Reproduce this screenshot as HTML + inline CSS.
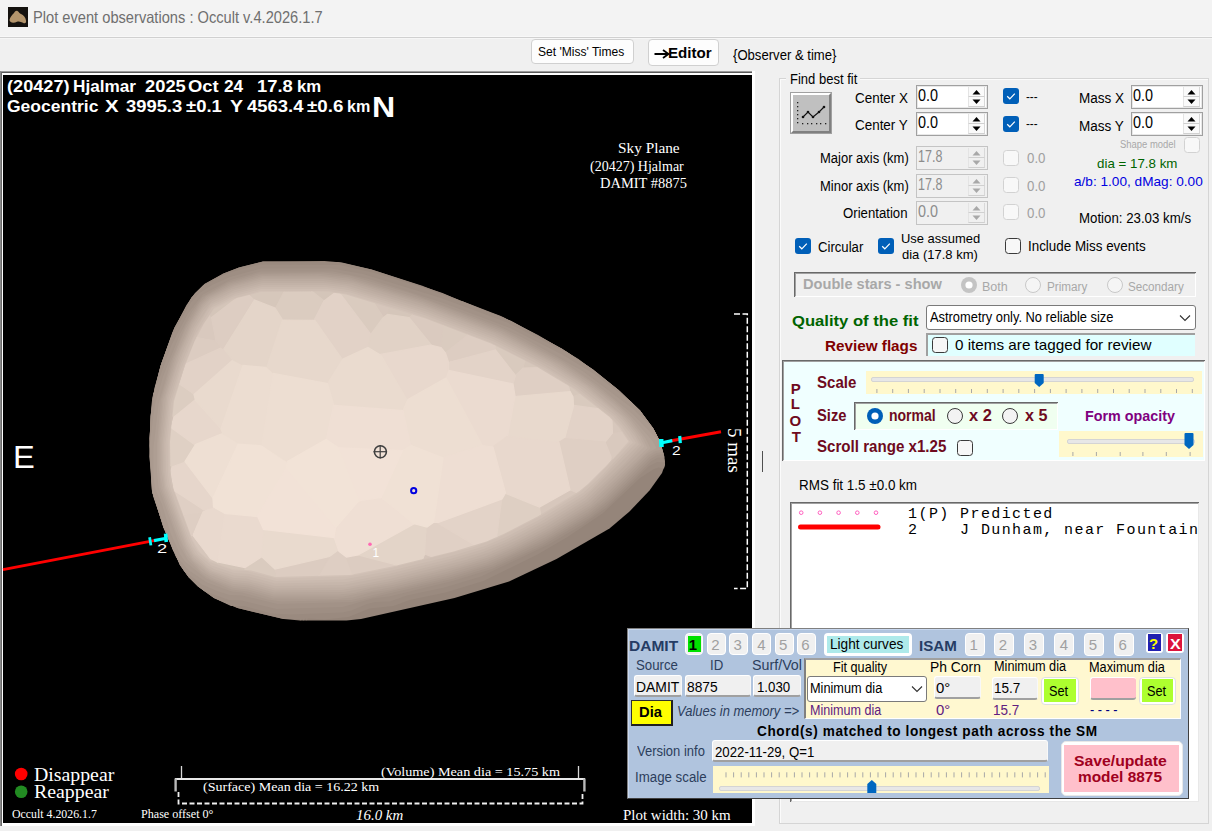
<!DOCTYPE html><html><head><meta charset="utf-8"><style>html,body{margin:0;padding:0;width:1212px;height:831px;overflow:hidden;}body{position:relative;background:#f0f0f0;font-family:"Liberation Sans",sans-serif;}</style></head><body style=""><div style="position:absolute;left:0px;top:0px;width:1212px;height:37px;background:#f3f3f3"></div>
<div style="position:absolute;left:0px;top:36px;width:1212px;height:1px;background:#f8f8f8"></div>
<div style="position:absolute;left:0px;top:37px;width:1212px;height:1px;background:#d0d0d0"></div>
<div style="position:absolute;left:0px;top:38px;width:1212px;height:1px;background:#f6f6f6"></div>
<svg style="position:absolute;left:8px;top:7px" width="20" height="20" viewBox="0 0 20 20"><rect width="20" height="20" fill="#15120f"/><path d="M1.5,13 C2,10 4,8 6,6 C7,4.5 8,3.5 9.5,4 C11,5 11.5,6.5 13,7 C15.5,8 17.5,10.5 18,13.5 C18.5,16 17,17 15,15.8 C13,14.8 11,14 9,14.8 C6.5,16 2,16.5 1.5,13 Z" fill="#b4956c"/></svg>
<div style="position:absolute;left:33.31px;top:9.00px;white-space:pre;color:#6f6f6f;font-family:'Liberation Sans', sans-serif;font-size:16.5px;line-height:16.5px;font-weight:400;font-style:normal;transform:scaleX(0.8880);transform-origin:0 0;">Plot event observations : Occult v.4.2026.1.7</div>
<div style="position:absolute;left:531px;top:39px;width:103px;height:25px;background:#fdfdfd;border:1px solid #d0d0d0;border-radius:4px;box-sizing:border-box"></div>
<div style="position:absolute;left:538.00px;top:45.80px;white-space:pre;color:#000;font-family:'Liberation Sans', sans-serif;font-size:12px;line-height:12px;font-weight:400;font-style:normal;transform:scaleX(1.0035);transform-origin:0 0;">Set 'Miss' Times</div>
<div style="position:absolute;left:648px;top:39px;width:71px;height:27px;background:#fdfdfd;border:1px solid #d0d0d0;border-radius:4px;box-sizing:border-box"></div>
<svg style="position:absolute;left:654px;top:47px" width="16" height="14" viewBox="0 0 16 14"><path d="M0.5,7 L13,7" stroke="#000" stroke-width="2"/><path d="M9,3 L14.5,7 L9,11" fill="none" stroke="#000" stroke-width="1.8"/></svg>
<div style="position:absolute;left:667.99px;top:45.00px;white-space:pre;color:#000;font-family:'Liberation Sans', sans-serif;font-size:15px;line-height:15px;font-weight:700;font-style:normal;transform:scaleX(1.0071);transform-origin:0 0;">Editor</div>
<div style="position:absolute;left:732.60px;top:47.50px;white-space:pre;color:#000;font-family:'Liberation Sans', sans-serif;font-size:14px;line-height:14px;font-weight:400;font-style:normal;transform:scaleX(0.9364);transform-origin:0 0;">{Observer &amp; time}</div>
<div style="position:absolute;left:0px;top:71px;width:755px;height:755px;background:#ffffff"></div>
<div style="position:absolute;left:0px;top:71px;width:752px;height:1px;background:#9a9a9a"></div>
<div style="position:absolute;left:0px;top:72px;width:752px;height:1px;background:#5a5a5a"></div>
<div style="position:absolute;left:0px;top:71px;width:1px;height:755px;background:#8a8a8a"></div>
<div style="position:absolute;left:1px;top:72px;width:1px;height:754px;background:#6a6a6a"></div>
<div style="position:absolute;left:3px;top:75px;width:749px;height:748px;background:#000000"></div>
<div style="position:absolute;left:6.83px;top:77.80px;white-space:pre;color:#ffffff;font-family:'Liberation Sans', sans-serif;font-size:17px;line-height:17px;font-weight:700;font-style:normal;transform:scaleX(1.0684);transform-origin:0 0;">(20427)</div>
<div style="position:absolute;left:73.39px;top:77.80px;white-space:pre;color:#ffffff;font-family:'Liberation Sans', sans-serif;font-size:17px;line-height:17px;font-weight:700;font-style:normal;transform:scaleX(1.0098);transform-origin:0 0;">Hjalmar</div>
<div style="position:absolute;left:144.62px;top:77.80px;white-space:pre;color:#ffffff;font-family:'Liberation Sans', sans-serif;font-size:17px;line-height:17px;font-weight:700;font-style:normal;transform:scaleX(1.0778);transform-origin:0 0;">2025</div>
<div style="position:absolute;left:188.32px;top:77.80px;white-space:pre;color:#ffffff;font-family:'Liberation Sans', sans-serif;font-size:17px;line-height:17px;font-weight:700;font-style:normal;transform:scaleX(1.0815);transform-origin:0 0;">Oct</div>
<div style="position:absolute;left:223.98px;top:77.80px;white-space:pre;color:#ffffff;font-family:'Liberation Sans', sans-serif;font-size:17px;line-height:17px;font-weight:700;font-style:normal;transform:scaleX(1.0167);transform-origin:0 0;">24</div>
<div style="position:absolute;left:256.92px;top:77.80px;white-space:pre;color:#ffffff;font-family:'Liberation Sans', sans-serif;font-size:17px;line-height:17px;font-weight:700;font-style:normal;transform:scaleX(1.0813);transform-origin:0 0;">17.8</div>
<div style="position:absolute;left:297.01px;top:77.80px;white-space:pre;color:#ffffff;font-family:'Liberation Sans', sans-serif;font-size:17px;line-height:17px;font-weight:700;font-style:normal;transform:scaleX(0.9870);transform-origin:0 0;">km</div>
<div style="position:absolute;left:6.87px;top:97.90px;white-space:pre;color:#ffffff;font-family:'Liberation Sans', sans-serif;font-size:17px;line-height:17px;font-weight:700;font-style:normal;transform:scaleX(1.0287);transform-origin:0 0;">Geocentric</div>
<div style="position:absolute;left:104.80px;top:97.90px;white-space:pre;color:#ffffff;font-family:'Liberation Sans', sans-serif;font-size:17px;line-height:17px;font-weight:700;font-style:normal;transform:scaleX(1.2000);transform-origin:0 0;">X</div>
<div style="position:absolute;left:125.90px;top:97.90px;white-space:pre;color:#ffffff;font-family:'Liberation Sans', sans-serif;font-size:17px;line-height:17px;font-weight:700;font-style:normal;transform:scaleX(1.0808);transform-origin:0 0;">3995.3</div>
<div style="position:absolute;left:185.70px;top:97.90px;white-space:pre;color:#ffffff;font-family:'Liberation Sans', sans-serif;font-size:17px;line-height:17px;font-weight:700;font-style:normal;transform:scaleX(1.0879);transform-origin:0 0;">±0.1</div>
<div style="position:absolute;left:230.30px;top:97.90px;white-space:pre;color:#ffffff;font-family:'Liberation Sans', sans-serif;font-size:17px;line-height:17px;font-weight:700;font-style:normal;transform:scaleX(1.1545);transform-origin:0 0;">Y</div>
<div style="position:absolute;left:246.80px;top:97.90px;white-space:pre;color:#ffffff;font-family:'Liberation Sans', sans-serif;font-size:17px;line-height:17px;font-weight:700;font-style:normal;transform:scaleX(1.0846);transform-origin:0 0;">4563.4</div>
<div style="position:absolute;left:307.00px;top:97.90px;white-space:pre;color:#ffffff;font-family:'Liberation Sans', sans-serif;font-size:17px;line-height:17px;font-weight:700;font-style:normal;transform:scaleX(1.1030);transform-origin:0 0;">±0.6</div>
<div style="position:absolute;left:346.95px;top:97.90px;white-space:pre;color:#ffffff;font-family:'Liberation Sans', sans-serif;font-size:17px;line-height:17px;font-weight:700;font-style:normal;transform:scaleX(0.9478);transform-origin:0 0;">km</div>
<div style="position:absolute;left:372.42px;top:91.80px;white-space:pre;color:#ffffff;font-family:'Liberation Sans', sans-serif;font-size:29.5px;line-height:29.5px;font-weight:700;font-style:normal;transform:scaleX(1.0889);transform-origin:0 0;">N</div>
<div style="position:absolute;left:12.66px;top:442.00px;white-space:pre;color:#ffffff;font-family:'Liberation Sans', sans-serif;font-size:30.5px;line-height:30.5px;font-weight:400;font-style:normal;transform:scaleX(1.0706);transform-origin:0 0;">E</div>
<div style="position:absolute;left:618.38px;top:140.50px;white-space:pre;color:#ffffff;font-family:'Liberation Serif', serif;font-size:15px;line-height:15px;font-weight:400;font-style:normal;transform:scaleX(1.0203);transform-origin:0 0;">Sky Plane</div>
<div style="position:absolute;left:589.67px;top:159.00px;white-space:pre;color:#ffffff;font-family:'Liberation Serif', serif;font-size:15px;line-height:15px;font-weight:400;font-style:normal;transform:scaleX(0.9340);transform-origin:0 0;">(20427) Hjalmar</div>
<div style="position:absolute;left:600.43px;top:176.10px;white-space:pre;color:#ffffff;font-family:'Liberation Serif', serif;font-size:15px;line-height:15px;font-weight:400;font-style:normal;transform:scaleX(0.9652);transform-origin:0 0;">DAMIT #8875</div>
<svg style="position:absolute;left:0;top:0" width="1212" height="831" viewBox="0 0 1212 831"><path d="M152.5,397.0 L149.5,438.5 L152.0,491.0 L163.5,527.5 L180.0,565.0 L188.5,577.0 L198.0,586.5 L214.0,598.0 L237.5,608.0 L283.5,619.0 L300.0,620.5 L346.5,620.5 L361.0,619.0 L454.5,598.0 L509.0,581.5 L556.5,559.0 L609.5,528.5 L629.5,511.5 L649.5,490.5 L662.0,473.0 L665.0,464.5 L664.0,455.0 L659.0,439.5 L653.0,428.0 L640.0,410.5 L618.5,390.0 L578.5,359.0 L538.0,335.0 L499.5,315.5 L421.5,285.5 L371.5,269.5 L342.0,262.5 L324.5,261.0 L263.0,261.5 L239.0,267.5 L223.5,273.5 L204.5,284.0 L191.5,297.5 L174.5,327.5 L160.5,366.0Z" fill="#95857a"/><path d="M152.0,400.5 L149.5,438.5 L152.0,491.0 L163.5,527.5 L180.0,565.0 L188.5,577.0 L198.0,586.5 L214.0,598.0 L237.5,608.0 L283.5,619.0 L299.5,619.0 L300.0,620.5 L302.5,619.0 L303.5,620.5 L305.5,618.5 L306.5,620.5 L308.0,618.5 L324.5,619.5 L348.5,617.0 L369.5,608.5 L393.5,606.0 L409.5,600.0 L445.5,592.5 L483.5,581.0 L537.5,554.5 L567.5,537.0 L602.5,513.5 L640.0,478.0 L654.0,469.0 L658.5,467.5 L664.0,468.5 L665.0,464.5 L664.0,455.0 L659.0,439.5 L653.0,428.0 L640.0,410.5 L618.5,390.0 L593.0,369.5 L562.5,349.0 L503.0,317.0 L477.5,308.0 L442.5,293.0 L371.5,269.5 L338.0,262.0 L263.0,261.5 L239.0,267.5 L223.5,273.5 L204.5,284.0 L191.5,297.5 L174.5,327.5 L160.5,366.0Z" fill="#9a8a7f"/><path d="M152.0,400.5 L149.5,438.5 L152.0,491.0 L163.5,527.5 L180.0,565.0 L188.5,577.0 L198.0,586.5 L214.0,598.0 L231.0,606.0 L244.0,606.0 L271.0,613.5 L290.5,614.5 L342.5,612.5 L351.5,610.5 L367.0,604.0 L375.5,602.0 L390.0,601.5 L407.0,595.5 L444.5,587.5 L481.0,576.5 L548.5,544.5 L582.0,525.0 L606.0,508.0 L648.5,466.5 L657.0,462.0 L665.0,462.5 L659.0,439.5 L653.0,428.0 L640.0,410.5 L618.5,390.0 L593.0,369.5 L562.5,349.0 L511.5,321.0 L463.0,301.5 L457.5,300.5 L457.0,299.0 L453.5,299.0 L423.0,287.5 L374.5,273.0 L340.0,265.0 L260.0,264.5 L232.0,272.0 L217.5,277.5 L216.0,279.5 L214.0,279.0 L213.0,281.0 L203.0,285.5 L195.0,293.0 L186.5,305.0 L172.5,332.0 L160.5,366.0Z" fill="#9e8e83"/><path d="M150.5,416.0 L149.5,456.5 L152.0,491.0 L163.5,527.5 L180.0,565.0 L188.5,577.0 L204.0,591.0 L229.0,600.0 L241.5,600.5 L276.5,609.0 L342.5,607.0 L372.5,598.5 L389.0,596.5 L452.5,581.0 L492.0,569.0 L542.5,545.5 L589.5,518.0 L606.5,505.0 L651.5,461.0 L658.0,457.5 L664.5,457.5 L660.0,442.0 L655.0,431.5 L640.0,410.5 L618.5,390.0 L593.0,369.5 L565.5,351.0 L562.0,350.5 L561.5,348.5 L560.0,349.5 L559.5,347.5 L558.5,348.5 L506.0,322.0 L441.0,298.0 L363.0,274.0 L331.5,268.5 L261.0,268.5 L230.0,277.0 L213.0,284.5 L199.5,293.0 L191.0,302.5 L174.0,332.5 L172.0,333.5 L173.0,335.0 L171.5,336.0 L161.5,363.0 L154.5,388.0Z" fill="#a29287"/><path d="M150.5,416.0 L149.5,456.5 L153.0,496.0 L167.0,536.0 L175.5,556.0 L184.0,571.0 L202.0,584.5 L217.0,591.0 L229.5,595.0 L242.0,595.5 L277.5,604.0 L352.0,602.0 L452.0,579.0 L493.0,566.5 L543.0,543.0 L589.0,516.0 L608.0,501.0 L650.5,459.0 L657.5,455.0 L663.5,454.0 L659.0,439.5 L653.0,428.0 L640.0,410.5 L631.0,401.5 L594.0,374.0 L563.0,355.0 L510.0,328.0 L443.5,303.0 L369.0,279.0 L333.5,271.5 L260.5,271.5 L230.5,280.0 L203.0,294.5 L188.0,313.5 L171.5,345.0 L158.0,382.0 L155.5,385.5 L155.5,389.5 L153.0,394.0 L154.0,395.0Z" fill="#a6968b"/><path d="M149.5,445.5 L152.5,493.5 L156.5,500.5 L156.0,504.0 L158.5,505.5 L157.0,508.0 L159.5,509.0 L163.5,527.5 L167.0,533.0 L173.0,550.5 L176.5,555.0 L175.5,556.0 L178.0,557.0 L177.0,559.0 L178.5,559.0 L189.0,570.5 L207.0,582.5 L231.5,591.5 L242.0,592.5 L267.5,599.5 L281.5,601.5 L351.5,600.0 L448.0,578.0 L492.5,564.5 L546.5,539.0 L588.5,514.0 L604.0,502.0 L649.5,457.0 L656.5,453.0 L663.0,452.0 L659.0,439.5 L653.0,428.0 L632.5,408.5 L582.5,371.0 L522.5,337.5 L497.0,325.5 L411.0,293.5 L349.5,275.5 L324.0,272.5 L258.5,273.5 L228.0,282.5 L202.5,297.0 L192.0,311.5 L180.0,334.0 L163.0,376.5 L155.0,404.0Z" fill="#aa9a8f"/><path d="M153.5,477.0 L155.0,488.5 L162.0,504.5 L170.5,533.0 L179.5,553.5 L185.0,561.5 L206.0,578.5 L231.5,589.5 L247.5,591.5 L273.0,598.5 L337.0,599.0 L352.5,597.5 L371.0,592.5 L391.5,589.5 L447.5,576.0 L485.5,565.0 L509.5,555.0 L546.0,537.0 L588.0,512.0 L606.5,497.0 L648.0,455.5 L655.5,451.0 L662.5,449.5 L658.5,438.5 L653.5,435.5 L633.0,414.5 L597.0,385.0 L563.5,362.0 L502.5,329.5 L427.0,300.5 L348.5,277.0 L321.0,274.0 L261.5,274.5 L229.5,283.5 L206.0,296.0 L199.0,303.5 L186.0,325.0 L171.0,361.0 L158.5,404.0 L153.5,447.5Z" fill="#ae9e93"/><path d="M157.0,472.5 L158.5,487.0 L179.5,545.0 L188.0,560.0 L203.0,574.5 L210.0,579.0 L233.5,588.0 L247.5,589.5 L273.5,596.5 L343.0,596.5 L393.0,587.0 L447.0,574.0 L486.5,562.5 L511.5,552.0 L550.0,532.5 L591.0,507.5 L602.0,498.5 L647.0,453.5 L656.5,448.0 L652.5,441.0 L632.0,417.5 L614.5,401.0 L590.5,382.0 L562.0,363.0 L503.0,331.5 L423.5,301.0 L348.0,278.5 L317.5,275.5 L262.0,276.0 L231.0,284.5 L207.0,297.0 L200.0,304.5 L185.5,329.0 L173.5,358.0 L161.0,399.0 L157.0,443.5Z" fill="#b2a297"/><path d="M158.5,465.0 L160.5,487.5 L176.0,531.5 L186.5,555.0 L201.0,571.0 L213.0,578.5 L233.0,586.0 L248.0,587.5 L273.5,594.5 L339.0,594.5 L354.0,593.0 L370.5,588.5 L392.5,585.0 L446.5,572.0 L487.5,560.0 L517.5,547.0 L549.5,530.5 L590.5,505.5 L650.5,448.5 L645.0,437.5 L630.5,418.5 L619.0,407.0 L593.0,386.0 L560.5,364.0 L500.0,332.0 L423.0,302.5 L353.5,281.5 L326.5,277.5 L262.5,277.5 L232.5,285.5 L209.5,297.0 L202.0,304.0 L190.5,322.5 L175.0,358.0 L162.5,398.5 L158.5,441.5Z" fill="#b6a69b"/><path d="M160.5,477.0 L163.0,490.5 L183.0,544.5 L192.5,560.5 L209.0,574.5 L233.5,584.0 L248.5,585.5 L274.0,592.5 L344.5,592.0 L392.0,583.0 L461.0,566.0 L490.0,557.0 L514.0,546.5 L549.0,528.5 L589.5,503.5 L647.5,448.0 L642.0,436.5 L629.5,420.0 L616.5,407.0 L595.5,390.0 L559.0,365.0 L499.5,333.5 L419.5,303.0 L353.0,283.0 L323.5,279.0 L263.0,279.0 L234.0,286.5 L210.5,298.0 L203.0,305.0 L191.0,324.5 L176.5,358.0 L163.5,400.5 L160.0,439.5Z" fill="#baaa9f"/><path d="M161.5,470.5 L164.5,490.5 L186.5,548.5 L194.0,560.0 L209.0,572.5 L233.5,582.0 L248.5,583.5 L274.5,590.5 L342.5,590.0 L391.5,581.0 L445.5,568.0 L484.0,557.0 L509.0,546.5 L545.0,528.0 L588.0,501.5 L644.5,446.5 L640.0,437.0 L625.5,418.0 L587.0,385.5 L550.5,362.0 L495.5,333.5 L428.5,308.0 L351.0,284.5 L323.5,281.0 L262.5,281.0 L231.0,289.5 L209.5,300.5 L203.0,307.5 L192.0,325.5 L180.0,352.5 L166.0,395.5 L161.5,438.0Z" fill="#beaea3"/><path d="M163.0,471.5 L165.0,487.0 L186.5,545.0 L194.0,557.5 L209.5,571.0 L233.5,580.0 L249.0,581.5 L275.0,588.5 L346.0,587.5 L389.5,579.0 L464.0,560.5 L489.0,552.5 L516.0,540.5 L547.0,524.0 L586.0,500.0 L625.0,463.0 L641.5,445.0 L635.0,433.0 L621.0,415.5 L585.0,386.0 L550.5,364.0 L494.0,335.0 L424.0,308.5 L346.5,285.5 L324.5,283.0 L262.5,283.0 L235.0,290.0 L212.0,301.0 L203.0,310.5 L191.5,330.0 L177.0,365.0 L167.0,397.5 L162.5,444.0Z" fill="#c2b2a7"/><path d="M164.5,472.0 L166.0,485.5 L187.0,542.5 L193.5,554.5 L207.0,567.5 L213.0,571.0 L234.0,578.0 L246.0,578.5 L274.5,586.0 L342.5,585.0 L391.0,576.0 L445.0,563.0 L483.0,552.0 L506.0,542.5 L545.5,522.0 L584.5,498.0 L639.0,444.5 L635.5,437.0 L623.0,420.5 L611.0,409.0 L585.0,388.5 L553.5,368.0 L496.0,338.0 L426.5,311.5 L346.5,287.5 L325.5,285.0 L262.0,285.0 L232.0,293.0 L210.5,304.0 L194.5,328.0 L182.5,355.0 L168.5,398.0 L164.0,442.0Z" fill="#c6b6ab"/><path d="M166.0,472.0 L167.5,485.0 L188.0,541.0 L195.0,554.0 L207.5,565.5 L215.0,569.5 L234.0,575.5 L249.0,576.5 L275.0,583.5 L347.0,582.0 L390.5,573.5 L452.0,558.5 L484.0,549.0 L504.5,540.5 L539.5,522.5 L583.0,496.0 L590.5,490.0 L636.0,443.0 L629.0,431.5 L616.0,416.0 L577.5,385.5 L534.0,359.5 L492.0,338.5 L420.5,311.5 L348.5,290.0 L326.5,287.0 L261.5,287.0 L236.0,293.5 L213.0,304.5 L207.5,310.0 L196.5,328.0 L181.0,364.0 L169.5,401.5 L165.5,444.0Z" fill="#cabaaf"/><path d="M168.0,476.0 L170.0,487.0 L180.0,516.0 L192.0,545.5 L198.0,554.5 L211.5,565.5 L234.0,573.0 L249.5,574.0 L276.0,581.0 L343.5,579.5 L392.0,570.5 L451.5,556.0 L485.0,546.0 L505.0,537.5 L538.0,520.5 L583.0,493.0 L598.5,479.0 L633.0,442.5 L622.0,426.0 L613.0,416.0 L577.5,388.0 L548.0,369.5 L494.0,341.5 L424.5,315.0 L350.5,292.5 L328.0,289.0 L261.0,289.0 L233.0,296.5 L211.5,307.5 L193.5,337.5 L180.0,372.0 L171.0,403.0 L167.5,440.0Z" fill="#cebeb3"/><path d="M169.5,471.5 L171.0,484.0 L191.5,540.0 L197.5,551.0 L209.5,562.0 L233.5,570.5 L247.0,571.0 L276.5,578.5 L348.0,576.5 L391.5,568.0 L472.5,547.5 L498.0,538.0 L540.0,516.5 L579.5,492.5 L593.0,481.0 L630.0,442.0 L620.0,427.0 L610.5,416.5 L575.5,389.0 L543.0,369.0 L490.0,342.0 L417.0,314.5 L346.0,293.5 L328.0,291.0 L260.5,291.0 L233.0,298.5 L214.0,308.0 L199.0,330.5 L184.5,364.5 L173.0,401.5 L169.0,444.0Z" fill="#d2c2b7"/><path d="M171.0,468.5 L173.0,484.5 L193.5,540.0 L199.5,550.5 L210.0,560.0 L233.5,568.0 L250.0,569.0 L277.5,576.0 L307.5,574.0 L346.0,574.0 L388.5,566.0 L448.5,551.5 L478.5,543.0 L499.5,534.5 L538.5,514.5 L578.0,490.5 L598.0,472.5 L627.0,441.0 L608.5,417.5 L572.0,389.0 L542.5,371.0 L492.0,345.0 L422.5,318.5 L349.5,296.5 L328.0,293.5 L260.0,293.5 L237.0,299.0 L214.0,310.0 L201.5,329.5 L187.0,362.5 L175.0,400.5 L170.5,448.0Z" fill="#d6c6bb"/><path d="M173.0,471.5 L174.5,483.0 L195.5,540.0 L202.0,550.5 L210.5,558.0 L233.0,565.5 L250.5,566.5 L278.0,573.5 L301.0,571.5 L350.0,571.0 L392.5,562.5 L448.0,549.0 L481.0,539.5 L502.0,530.5 L537.0,512.5 L578.0,487.5 L596.5,470.5 L624.0,440.5 L610.0,421.5 L568.5,389.0 L520.0,361.0 L489.0,346.5 L418.0,322.0 L344.5,302.0 L318.0,299.5 L258.5,300.0 L237.5,305.0 L216.5,314.0 L201.5,335.5 L193.5,350.5 L180.0,388.5 L176.0,404.5 L172.5,443.0Z" fill="#dacabf"/><path d="M174.5,469.0 L176.0,482.0 L196.5,537.5 L202.0,547.5 L211.0,556.0 L233.0,563.0 L250.5,564.0 L274.0,570.5 L308.0,568.5 L348.0,568.5 L392.0,560.0 L455.0,544.5 L481.5,536.5 L503.5,527.0 L546.0,504.5 L573.0,485.5 L584.5,474.0 L617.5,435.0 L603.5,418.5 L566.0,391.5 L514.0,364.5 L482.5,351.0 L407.5,325.5 L342.0,308.0 L322.0,306.0 L259.5,306.0 L240.0,310.5 L220.5,318.5 L201.5,347.5 L184.5,385.0 L178.0,403.0 L174.0,447.5Z" fill="#decec3"/><path d="M176.5,471.5 L177.5,480.5 L198.5,537.5 L203.5,546.5 L211.5,554.0 L233.0,560.5 L251.0,561.5 L274.5,568.0 L301.5,566.0 L352.0,565.5 L447.0,544.0 L473.5,536.5 L488.0,530.5 L524.5,508.5 L566.0,479.0 L577.0,468.5 L608.5,431.0 L604.5,426.5 L580.5,409.0 L547.5,388.5 L489.5,360.5 L428.5,339.0 L358.5,318.5 L336.0,313.5 L258.0,312.5 L239.0,317.0 L224.0,323.5 L206.0,351.5 L189.0,389.5 L183.0,407.5 L176.5,445.5Z" fill="#e2d2c7"/><path d="M181.5,477.5 L187.5,494.0 L194.5,522.5 L202.5,541.5 L211.0,551.0 L230.0,556.0 L253.5,557.5 L272.5,563.5 L302.0,561.0 L344.5,561.0 L386.0,553.0 L437.0,540.0 L468.0,529.0 L486.0,520.5 L517.5,501.5 L562.0,470.0 L597.5,429.5 L553.0,399.0 L507.0,375.5 L482.0,364.5 L430.5,346.5 L339.0,329.5 L256.0,328.5 L231.0,333.5 L215.0,347.0 L203.5,370.5 L190.0,404.0 L182.5,445.5Z" fill="#e6d6cb"/><path d="M187.5,474.0 L207.5,539.5 L214.5,545.0 L228.5,547.5 L240.5,547.0 L252.0,548.5 L271.0,554.5 L298.5,552.0 L349.5,551.5 L403.5,539.5 L446.5,526.0 L480.0,512.5 L519.0,489.0 L555.5,463.0 L564.0,455.0 L585.5,429.0 L545.0,402.0 L493.5,385.0 L467.5,378.0 L395.5,362.0 L334.0,351.5 L249.5,351.5 L245.0,352.5 L198.0,399.0 L194.5,410.5 L188.5,445.5Z" fill="#eadacf"/><path d="M193.5,465.0 L194.0,474.0 L199.5,488.0 L203.0,506.0 L212.5,534.5 L215.0,537.0 L226.5,539.0 L244.0,538.5 L253.5,540.0 L271.5,545.5 L304.5,542.5 L350.5,542.5 L389.0,533.5 L439.5,517.5 L475.5,503.5 L527.5,471.5 L526.0,441.5 L523.0,418.5 L471.0,401.5 L369.5,396.0 L297.5,397.0 L228.5,401.5 L218.5,412.5 L195.5,445.5Z" fill="#eeded3"/><path d="M451.0,474.5 L446.0,458.0 L438.0,441.5 L374.0,435.5 L325.5,435.5 L290.0,438.0 L225.0,447.0 L218.5,458.0 L208.0,498.0 L217.0,528.0 L246.0,528.5 L259.0,531.0 L272.0,536.0 L303.5,532.0 L348.0,532.5 L386.5,523.5 L451.0,502.0 L452.5,496.0Z" fill="#f2e2d7"/><defs><clipPath id="fc"><path d="M170.5,475.0 L173.5,488.5 L192.5,540.0 L200.0,552.5 L211.5,562.0 L232.5,569.0 L251.0,570.5 L275.0,577.0 L350.0,575.0 L394.5,566.0 L453.5,551.5 L486.5,541.5 L503.5,534.0 L537.5,516.5 L579.5,491.0 L588.0,484.0 L613.5,458.5 L628.5,441.5 L619.0,427.5 L609.5,417.0 L573.0,388.5 L535.5,366.0 L491.0,343.5 L425.5,318.5 L346.0,294.5 L328.5,292.0 L314.5,291.5 L260.5,292.0 L237.0,298.0 L214.0,309.0 L204.0,323.5 L194.5,341.5 L184.5,367.0 L174.0,401.0 L170.0,441.5Z"/></clipPath></defs><g clip-path="url(#fc)"><polygon points="171.5,467.0 159.0,460.0 150.0,459.0 151.5,486.0 168.0,472.5" fill="#d3c4b8" stroke="#d3c4b8" stroke-width="1.2"/><polygon points="539.0,336.5 529.0,347.5 523.5,367.5 542.0,367.0 555.5,357.5" fill="#d6c7bb" stroke="#d6c7bb" stroke-width="1.2"/><polygon points="605.0,379.5 591.5,369.0 570.0,386.0 570.0,391.0 573.5,396.0 602.0,387.5" fill="#d6c7bb" stroke="#d6c7bb" stroke-width="1.2"/><polygon points="628.0,399.0 614.0,406.5 612.0,409.5 613.0,433.0 634.5,430.5 633.0,403.5" fill="#d7c7bc" stroke="#d7c7bc" stroke-width="1.2"/><polygon points="186.0,565.5 209.0,586.5 217.5,562.5 205.5,561.0 191.0,562.0" fill="#d3c4b8" stroke="#d3c4b8" stroke-width="1.2"/><polygon points="202.5,512.5 177.5,516.0 164.0,527.5 170.0,542.5 187.0,540.5 190.5,537.5" fill="#decec3" stroke="#decec3" stroke-width="1.2"/><polygon points="170.5,470.5 151.5,486.5 154.5,501.0 160.0,500.5 173.0,490.0" fill="#d2c3b7" stroke="#d2c3b7" stroke-width="1.2"/><polygon points="164.0,403.5 151.5,407.0 150.5,425.0 158.5,427.0 170.5,427.0 173.5,417.5" fill="#d3c3b8" stroke="#d3c3b8" stroke-width="1.2"/><polygon points="167.5,346.0 164.5,357.0 175.5,383.5 179.0,383.5 185.0,364.0" fill="#d2c2b7" stroke="#d2c2b7" stroke-width="1.2"/><polygon points="187.5,304.0 181.0,317.0 190.5,336.0 215.5,340.5 211.5,318.0 205.5,309.5" fill="#d9c9be" stroke="#d9c9be" stroke-width="1.2"/><polygon points="254.5,263.5 246.5,265.5 248.5,294.0 250.5,295.5 269.0,271.5" fill="#d3c3b8" stroke="#d3c3b8" stroke-width="1.2"/><polygon points="322.5,269.5 300.5,282.0 324.0,300.5 336.0,291.5 335.0,287.5" fill="#d4c5b9" stroke="#d4c5b9" stroke-width="1.2"/><polygon points="366.5,281.0 363.0,285.5 383.5,317.0 387.5,314.0 390.5,305.0 384.5,284.0" fill="#d6c6bb" stroke="#d6c6bb" stroke-width="1.2"/><polygon points="423.0,295.0 402.0,294.0 391.0,304.0 388.0,314.0 409.5,317.0 423.5,304.0" fill="#d5c6ba" stroke="#d5c6ba" stroke-width="1.2"/><polygon points="463.5,305.5 444.0,318.5 441.0,347.0 445.5,352.5 475.5,328.5" fill="#dacbbf" stroke="#dacbbf" stroke-width="1.2"/><polygon points="495.5,334.5 495.5,349.5 516.0,374.5 523.0,367.5 528.5,347.5 514.0,335.5" fill="#d9cabe" stroke="#d9cabe" stroke-width="1.2"/><polygon points="613.0,407.0 602.0,388.0 573.0,396.5 574.0,405.0 611.5,410.0" fill="#d9cabe" stroke="#d9cabe" stroke-width="1.2"/><polygon points="612.5,433.5 605.5,442.0 612.0,458.5 628.0,468.5 637.5,467.0 642.5,464.0 636.0,432.0 634.0,431.0" fill="#d9c9be" stroke="#d9c9be" stroke-width="1.2"/><polygon points="218.0,562.5 209.0,587.0 208.5,592.5 218.0,592.5 241.5,587.0 245.0,568.0" fill="#d4c5b9" stroke="#d4c5b9" stroke-width="1.2"/><polygon points="187.5,540.5 189.5,562.0 212.0,560.5 193.0,536.0" fill="#d6c6bb" stroke="#d6c6bb" stroke-width="1.2"/><polygon points="160.5,500.5 177.0,515.5 202.5,512.0 204.5,510.5 173.5,490.5" fill="#dfcfc4" stroke="#dfcfc4" stroke-width="1.2"/><polygon points="170.5,427.5 159.5,460.0 172.5,466.5 184.5,462.0 194.5,445.0" fill="#dfd0c4" stroke="#dfd0c4" stroke-width="1.2"/><polygon points="179.0,384.0 171.0,385.5 164.0,403.0 173.5,417.0 194.5,400.0 193.5,394.5" fill="#dccdc1" stroke="#dccdc1" stroke-width="1.2"/><polygon points="168.0,345.5 185.5,364.0 221.0,347.5 215.5,341.0 192.0,336.5" fill="#dcccc1" stroke="#dcccc1" stroke-width="1.2"/><polygon points="241.5,294.0 227.0,288.0 205.5,306.0 205.0,308.5 211.5,317.0" fill="#d4c5b9" stroke="#d4c5b9" stroke-width="1.2"/><polygon points="286.0,265.0 268.5,272.5 251.0,295.5 254.0,299.5 275.0,307.5 290.5,279.0" fill="#d6c7bb" stroke="#d6c7bb" stroke-width="1.2"/><polygon points="290.5,279.5 275.5,308.5 282.5,319.5 314.0,319.0 323.5,300.5 301.0,282.5" fill="#dbccc0" stroke="#dbccc0" stroke-width="1.2"/><polygon points="340.5,292.5 371.0,334.0 383.0,317.0 363.0,286.0" fill="#dacbbf" stroke="#dacbbf" stroke-width="1.2"/><polygon points="423.5,304.5 409.5,317.5 431.5,344.5 440.5,347.0 443.5,318.0" fill="#dacabf" stroke="#dacabf" stroke-width="1.2"/><polygon points="493.5,330.5 486.0,328.0 476.0,328.5 446.0,352.5 448.5,361.5 495.0,349.5 495.0,334.0" fill="#ddcdc2" stroke="#ddcdc2" stroke-width="1.2"/><polygon points="513.5,383.0 515.5,396.0 569.5,390.5 568.5,385.5 542.0,367.5 523.0,368.0 516.0,375.0" fill="#dfcfc4" stroke="#dfcfc4" stroke-width="1.2"/><polygon points="574.0,405.5 565.5,438.0 605.5,441.5 612.5,433.0 611.5,410.5" fill="#e2d2c7" stroke="#e2d2c7" stroke-width="1.2"/><polygon points="628.0,469.0 611.5,459.0 585.0,494.5 599.5,498.5 626.0,478.5" fill="#d2c3b7" stroke="#d2c3b7" stroke-width="1.2"/><polygon points="578.0,493.5 569.5,490.5 540.0,507.0 545.0,535.5 563.5,537.0 573.0,529.5" fill="#d7c7bc" stroke="#d7c7bc" stroke-width="1.2"/><polygon points="424.5,555.0 423.5,559.0 440.5,582.5 465.0,580.5 469.0,579.0 469.0,571.5" fill="#d4c4b9" stroke="#d4c4b9" stroke-width="1.2"/><polygon points="338.0,551.0 330.0,556.5 306.5,596.5 324.5,605.0 354.5,580.5 346.0,557.0" fill="#decec3" stroke="#decec3" stroke-width="1.2"/><polygon points="262.0,557.5 245.0,569.0 242.5,587.0 248.0,601.0 263.5,597.0 277.0,578.5 275.0,569.5" fill="#dacbbf" stroke="#dacbbf" stroke-width="1.2"/><polygon points="212.5,507.5 203.0,512.0 193.0,535.5 210.5,558.5 217.5,562.0 224.5,513.5" fill="#e9d9ce" stroke="#e9d9ce" stroke-width="1.2"/><polygon points="172.0,467.0 171.0,470.5 174.0,490.5 204.0,510.0 213.0,507.0 212.0,497.0 184.5,462.5" fill="#e6d6cb" stroke="#e6d6cb" stroke-width="1.2"/><polygon points="195.0,400.0 174.0,417.0 171.0,427.5 194.5,444.5 222.0,433.0 220.5,428.5" fill="#e7d7cc" stroke="#e7d7cc" stroke-width="1.2"/><polygon points="232.0,359.5 225.0,350.5 221.0,348.0 186.0,364.0 179.5,384.0 194.0,394.0" fill="#e2d2c7" stroke="#e2d2c7" stroke-width="1.2"/><polygon points="248.5,294.5 242.0,294.0 211.5,317.5 216.0,341.0 223.0,348.5 254.0,300.0" fill="#ddcdc2" stroke="#ddcdc2" stroke-width="1.2"/><polygon points="336.0,292.0 324.0,301.0 314.5,319.5 342.5,359.0 367.5,347.0 370.5,334.0 340.0,293.5" fill="#e2d2c7" stroke="#e2d2c7" stroke-width="1.2"/><polygon points="368.0,347.0 381.5,354.0 431.0,344.5 409.0,317.5 387.5,314.5 382.5,318.5 371.5,333.5" fill="#e1d2c6" stroke="#e1d2c6" stroke-width="1.2"/><polygon points="515.5,375.5 495.5,350.0 449.0,362.5 450.0,370.5 513.0,383.5" fill="#e3d3c8" stroke="#e3d3c8" stroke-width="1.2"/><polygon points="570.0,391.5 515.0,396.5 508.0,436.0 557.0,442.0 564.5,438.5 573.5,406.0 573.0,397.0" fill="#e8d9cd" stroke="#e8d9cd" stroke-width="1.2"/><polygon points="565.0,438.5 559.5,442.0 570.0,489.5 578.5,493.5 584.5,494.0 611.0,459.5 611.0,456.5 605.0,442.0" fill="#dfcfc4" stroke="#dfcfc4" stroke-width="1.2"/><polygon points="505.5,494.0 502.0,499.5 496.5,539.0 536.0,539.0 544.0,536.0 539.5,507.5" fill="#decfc3" stroke="#decfc3" stroke-width="1.2"/><polygon points="426.5,527.5 425.0,554.0 469.0,571.0 481.0,549.0 437.0,523.0 434.0,522.5" fill="#e0d0c5" stroke="#e0d0c5" stroke-width="1.2"/><polygon points="346.5,557.5 355.5,581.5 361.0,585.5 375.0,586.0 410.0,576.0 412.5,569.5 359.0,555.5" fill="#dcccc1" stroke="#dcccc1" stroke-width="1.2"/><polygon points="329.5,557.0 276.5,569.0 275.5,570.0 277.0,577.5 296.0,599.5 306.0,596.5" fill="#dcccc1" stroke="#dcccc1" stroke-width="1.2"/><polygon points="225.0,514.0 218.0,562.0 245.0,567.5 261.5,557.0 263.5,530.0 257.0,517.0" fill="#eadacf" stroke="#eadacf" stroke-width="1.2"/><polygon points="222.5,433.5 195.5,444.5 185.0,461.5 212.5,497.5 238.0,444.5 237.0,442.5" fill="#eedfd3" stroke="#eedfd3" stroke-width="1.2"/><polygon points="233.0,360.0 194.0,394.5 195.5,400.5 220.5,428.0 242.5,366.0" fill="#e9dace" stroke="#e9dace" stroke-width="1.2"/><polygon points="254.5,300.0 224.0,349.0 232.5,359.5 243.0,365.0 266.5,367.0 282.0,319.0 275.0,308.0" fill="#e4d5c9" stroke="#e4d5c9" stroke-width="1.2"/><polygon points="441.0,347.5 430.5,345.0 380.5,354.5 407.0,399.5 446.0,377.5 448.5,371.0 448.5,362.0 445.5,353.0" fill="#e8d8cd" stroke="#e8d8cd" stroke-width="1.2"/><polygon points="449.0,370.5 446.5,378.0 482.5,445.0 493.0,446.5 507.5,436.0 515.0,396.0 513.0,384.0" fill="#ebdbd0" stroke="#ebdbd0" stroke-width="1.2"/><polygon points="493.5,446.5 506.0,493.5 539.5,507.0 570.0,490.0 559.0,442.5 507.0,436.5" fill="#e8d8cd" stroke="#e8d8cd" stroke-width="1.2"/><polygon points="501.5,500.0 437.5,523.0 480.5,548.5 491.5,546.5 496.5,538.0" fill="#e3d3c8" stroke="#e3d3c8" stroke-width="1.2"/><polygon points="426.0,527.5 414.0,524.5 358.5,555.0 412.5,569.0 423.0,558.5 424.5,554.5" fill="#e3d4c8" stroke="#e3d4c8" stroke-width="1.2"/><polygon points="264.0,530.0 262.0,557.0 275.0,569.0 329.5,556.5 337.5,550.5 333.5,537.5" fill="#e9dace" stroke="#e9dace" stroke-width="1.2"/><polygon points="238.5,443.5 213.0,498.0 213.5,507.0 225.0,513.5 257.0,516.5 285.0,470.0 286.5,462.0 261.5,445.0" fill="#f1e2d6" stroke="#f1e2d6" stroke-width="1.2"/><polygon points="243.0,365.5 221.0,429.0 223.0,433.5 238.0,443.0 261.5,444.5 273.0,373.0 267.0,367.5" fill="#ecddd1" stroke="#ecddd1" stroke-width="1.2"/><polygon points="282.5,320.0 267.0,367.0 273.5,373.0 327.5,383.0 342.0,359.0 315.0,320.5" fill="#e7d8cc" stroke="#e7d8cc" stroke-width="1.2"/><polygon points="328.0,383.0 334.0,404.5 403.0,410.0 407.0,400.0 381.0,355.5 368.0,347.5 343.0,359.0" fill="#eadbcf" stroke="#eadbcf" stroke-width="1.2"/><polygon points="446.0,378.0 408.0,399.5 403.5,409.5 411.0,445.0 442.0,457.5 482.0,445.0" fill="#edded2" stroke="#edded2" stroke-width="1.2"/><polygon points="493.0,447.0 482.0,445.5 443.5,458.0 434.5,522.5 438.5,522.5 502.0,499.0 505.5,493.0" fill="#eeded3" stroke="#eeded3" stroke-width="1.2"/><polygon points="414.0,524.0 381.5,498.0 362.5,500.5 358.0,503.0 336.0,527.5 334.5,538.5 339.0,551.5 346.5,557.0 358.0,555.0" fill="#efdfd4" stroke="#efdfd4" stroke-width="1.2"/><polygon points="286.5,468.0 257.5,516.0 263.5,529.5 334.0,537.5 335.5,527.5" fill="#f2e2d7" stroke="#f2e2d7" stroke-width="1.2"/><polygon points="273.5,373.5 262.0,445.0 287.0,461.5 326.5,438.5 333.5,404.5 327.5,383.5" fill="#edded2" stroke="#edded2" stroke-width="1.2"/><polygon points="333.5,405.5 326.5,439.0 337.5,447.0 403.5,450.0 410.5,445.5 403.0,410.5" fill="#efdfd4" stroke="#efdfd4" stroke-width="1.2"/><polygon points="411.0,445.5 403.0,450.5 381.5,497.5 413.5,523.5 427.0,527.0 433.5,522.5 443.0,458.0" fill="#f0e1d5" stroke="#f0e1d5" stroke-width="1.2"/><polygon points="326.0,439.5 287.5,461.5 286.5,467.5 336.0,527.0 359.5,500.0 338.5,448.0" fill="#f2e3d7" stroke="#f2e3d7" stroke-width="1.2"/><polygon points="339.0,448.0 360.0,500.5 381.0,497.5 402.5,450.5" fill="#f2e2d7" stroke="#f2e2d7" stroke-width="1.2"/></g></svg>
<svg style="position:absolute;left:0;top:0" width="1212" height="831" viewBox="0 0 1212 831"><line x1="3" y1="569.6" x2="150" y2="541.4" stroke="#ff0000" stroke-width="3"/><line x1="150" y1="541.4" x2="155" y2="540.4" stroke="#ff0000" stroke-width="3"/><line x1="154" y1="540.6" x2="165" y2="538.5" stroke="#00ffff" stroke-width="3.2"/><line x1="149.6" y1="537.3" x2="150.9" y2="545.4" stroke="#00ffff" stroke-width="2.8"/><line x1="165.6" y1="533.6" x2="166.3" y2="542" stroke="#00ffff" stroke-width="3.6"/><line x1="670" y1="440.9" x2="721" y2="431.7" stroke="#ff0000" stroke-width="3"/><line x1="662" y1="442.7" x2="672.3" y2="440.6" stroke="#00ffff" stroke-width="3.2"/><line x1="661.2" y1="439" x2="661.5" y2="447" stroke="#00ffff" stroke-width="4.5"/><line x1="679.7" y1="436" x2="680.3" y2="443.2" stroke="#00ffff" stroke-width="3.2"/><circle cx="380.4" cy="451.8" r="6" fill="none" stroke="#404040" stroke-width="1.6"/><line x1="373.5" y1="451.7" x2="387" y2="451.7" stroke="#404040" stroke-width="1.2"/><line x1="380.2" y1="445" x2="380.2" y2="458.5" stroke="#404040" stroke-width="1.2"/><circle cx="413.7" cy="490.7" r="2.6" fill="none" stroke="#0000e0" stroke-width="2"/><circle cx="370" cy="544.3" r="1.8" fill="#ff69b4"/><path d="M734,314 L747.3,314 L747.3,588.5 L734,588.5" fill="none" stroke="#ffffff" stroke-width="1.5" stroke-dasharray="6,2.5"/><line x1="181.5" y1="766" x2="181.5" y2="778" stroke="#d8d8d8" stroke-width="1.3"/><line x1="578.5" y1="766" x2="578.5" y2="778" stroke="#d8d8d8" stroke-width="1.3"/><line x1="175" y1="779" x2="585" y2="779" stroke="#e8e8e8" stroke-width="2"/><line x1="175.6" y1="778.5" x2="175.6" y2="791.5" stroke="#b8b8b8" stroke-width="2.4"/><line x1="584.4" y1="778.5" x2="584.4" y2="791.5" stroke="#b8b8b8" stroke-width="2.4"/><path d="M178.5,792 L178.5,803.5 L582.5,803.5 L582.5,792" fill="none" stroke="#f0f0f0" stroke-width="1.8" stroke-dasharray="5,2.5"/><circle cx="21.2" cy="774" r="6.3" fill="#ff0000"/><circle cx="21.2" cy="791.7" r="6.3" fill="#228b22"/></svg>
<div style="position:absolute;left:157.48px;top:543.00px;white-space:pre;color:#ffffff;font-family:'Liberation Sans', sans-serif;font-size:12px;line-height:12px;font-weight:400;font-style:normal;transform:scaleX(1.5200);transform-origin:0 0;">2</div>
<div style="position:absolute;left:671.70px;top:444.70px;white-space:pre;color:#ffffff;font-family:'Liberation Sans', sans-serif;font-size:12px;line-height:12px;font-weight:400;font-style:normal;transform:scaleX(1.3000);transform-origin:0 0;">2</div>
<div style="position:absolute;left:372.50px;top:547.10px;white-space:pre;color:#ffffff;font-family:'Liberation Sans', sans-serif;font-size:12px;line-height:12px;font-weight:400;font-style:normal;">1</div>
<div style="position:absolute;left:734px;top:450px;width:0;height:0"><div style="position:absolute;left:0;top:0;transform:rotate(90deg);transform-origin:0 0"><div style="position:absolute;left:-22px;top:-10px;white-space:pre;color:#fff;font-family:'Liberation Serif',serif;font-size:19px;line-height:19px">5 mas</div></div></div>
<div style="position:absolute;left:34.13px;top:765.60px;white-space:pre;color:#ffffff;font-family:'Liberation Serif', serif;font-size:18.5px;line-height:18.5px;font-weight:400;font-style:normal;transform:scaleX(1.0703);transform-origin:0 0;">Disappear</div>
<div style="position:absolute;left:34.13px;top:782.50px;white-space:pre;color:#ffffff;font-family:'Liberation Serif', serif;font-size:18.5px;line-height:18.5px;font-weight:400;font-style:normal;transform:scaleX(1.0725);transform-origin:0 0;">Reappear</div>
<div style="position:absolute;left:12.10px;top:808.00px;white-space:pre;color:#ffffff;font-family:'Liberation Serif', serif;font-size:12px;line-height:12px;font-weight:400;font-style:normal;transform:scaleX(0.9872);transform-origin:0 0;">Occult 4.2026.1.7</div>
<div style="position:absolute;left:140.99px;top:807.90px;white-space:pre;color:#ffffff;font-family:'Liberation Serif', serif;font-size:12px;line-height:12px;font-weight:400;font-style:normal;transform:scaleX(1.0071);transform-origin:0 0;">Phase offset 0°</div>
<div style="position:absolute;left:380.71px;top:764.80px;white-space:pre;color:#ffffff;font-family:'Liberation Serif', serif;font-size:13px;line-height:13px;font-weight:400;font-style:normal;transform:scaleX(1.0926);transform-origin:0 0;">(Volume) Mean dia = 15.75 km</div>
<div style="position:absolute;left:202.92px;top:780.20px;white-space:pre;color:#ffffff;font-family:'Liberation Serif', serif;font-size:13px;line-height:13px;font-weight:400;font-style:normal;transform:scaleX(1.0796);transform-origin:0 0;">(Surface) Mean dia = 16.22 km</div>
<div style="position:absolute;left:356.44px;top:807.40px;white-space:pre;color:#ffffff;font-family:'Liberation Serif', serif;font-size:15.5px;line-height:15.5px;font-weight:400;font-style:italic;transform:scaleX(0.9625);transform-origin:0 0;">16.0 km</div>
<div style="position:absolute;left:623.23px;top:807.10px;white-space:pre;color:#ffffff;font-family:'Liberation Serif', serif;font-size:15.5px;line-height:15.5px;font-weight:400;font-style:normal;transform:scaleX(0.9655);transform-origin:0 0;">Plot width: 30 km</div>
<div style="position:absolute;left:779px;top:78px;width:430px;height:746px;border:1px solid #d5d5d5;box-sizing:border-box"></div>
<div style="position:absolute;left:780px;top:79px;width:428px;height:744px;border:1px solid #fbfbfb;border-right:none;border-bottom:none;box-sizing:border-box"></div>
<div style="position:absolute;left:786px;top:72px;width:74px;height:12px;background:#f0f0f0"></div>
<div style="position:absolute;left:789.87px;top:72.40px;white-space:pre;color:#000;font-family:'Liberation Sans', sans-serif;font-size:14px;line-height:14px;font-weight:400;font-style:normal;transform:scaleX(0.9296);transform-origin:0 0;">Find best fit</div>
<div style="position:absolute;left:791px;top:93px;width:40px;height:40px;background:#c0c0c0;border-top:2px solid #ffffff;border-left:2px solid #ffffff;border-right:2px solid #808080;border-bottom:2px solid #808080;box-sizing:border-box;outline:1px solid #a0a0a0"></div>
<svg style="position:absolute;left:791px;top:93px" width="40" height="40" viewBox="0 0 40 40"><rect x="6" y="9" width="1.3" height="1.3" fill="#202020"/><rect x="6" y="13" width="1.3" height="1.3" fill="#202020"/><rect x="6" y="17" width="1.3" height="1.3" fill="#202020"/><rect x="6" y="21" width="1.3" height="1.3" fill="#202020"/><rect x="6" y="25" width="1.3" height="1.3" fill="#202020"/><rect x="6" y="29" width="1.3" height="1.3" fill="#202020"/><rect x="11" y="30" width="1.3" height="1.3" fill="#202020"/><rect x="16" y="30" width="1.3" height="1.3" fill="#202020"/><rect x="20" y="30" width="1.3" height="1.3" fill="#202020"/><rect x="25" y="30" width="1.3" height="1.3" fill="#202020"/><rect x="29" y="30" width="1.3" height="1.3" fill="#202020"/><rect x="34" y="30" width="1.3" height="1.3" fill="#202020"/><polyline points="12,24 17,19 22,24 28,19 33,14" fill="none" stroke="#101010" stroke-width="1.1"/><circle cx="12" cy="24" r="1.3" fill="#101010"/><circle cx="17" cy="19" r="1.3" fill="#101010"/><circle cx="22" cy="24" r="1.3" fill="#101010"/><circle cx="28" cy="19" r="1.3" fill="#101010"/><circle cx="33" cy="14" r="1.3" fill="#101010"/></svg>
<div style="position:absolute;left:855.24px;top:90.60px;white-space:pre;color:#000;font-family:'Liberation Sans', sans-serif;font-size:14px;line-height:14px;font-weight:400;font-style:normal;transform:scaleX(0.9593);transform-origin:0 0;">Center X</div>
<div style="position:absolute;left:855.24px;top:117.60px;white-space:pre;color:#000;font-family:'Liberation Sans', sans-serif;font-size:14px;line-height:14px;font-weight:400;font-style:normal;transform:scaleX(0.9593);transform-origin:0 0;">Center Y</div>
<div style="position:absolute;left:819.87px;top:151.40px;white-space:pre;color:#000;font-family:'Liberation Sans', sans-serif;font-size:14px;line-height:14px;font-weight:400;font-style:normal;transform:scaleX(0.9277);transform-origin:0 0;">Major axis (km)</div>
<div style="position:absolute;left:819.87px;top:178.50px;white-space:pre;color:#000;font-family:'Liberation Sans', sans-serif;font-size:14px;line-height:14px;font-weight:400;font-style:normal;transform:scaleX(0.9277);transform-origin:0 0;">Minor axis (km)</div>
<div style="position:absolute;left:842.96px;top:205.50px;white-space:pre;color:#000;font-family:'Liberation Sans', sans-serif;font-size:14px;line-height:14px;font-weight:400;font-style:normal;transform:scaleX(0.9418);transform-origin:0 0;">Orientation</div>
<div style="position:absolute;left:916px;top:85px;width:72px;height:24px;background:#ffffff;border:1px solid #a0a0a0;box-sizing:border-box"></div>
<div style="position:absolute;left:917px;top:86px;width:70px;height:22px;border:1px solid #e8e8e8;box-sizing:border-box"></div>
<div style="position:absolute;left:968px;top:87px;width:17px;height:10px;background:#fafafa;border-right:1px solid #d8d8d8;border-bottom:1px solid #d0d0d0;border-left:1px solid #e4e4e4;box-sizing:border-box"></div>
<div style="position:absolute;left:968px;top:97px;width:17px;height:10px;background:#fafafa;border-right:1px solid #d8d8d8;border-bottom:1px solid #d0d0d0;border-left:1px solid #e4e4e4;box-sizing:border-box"></div>
<svg style="position:absolute;left:968px;top:85px" width="17" height="24" viewBox="0 0 17 24"><path d="M4.5,9.5 L8.5,5 L12.5,9.5 Z" fill="#000000"/><path d="M4.5,14.5 L8.5,19 L12.5,14.5 Z" fill="#000000"/></svg>
<div style="position:absolute;left:917.53px;top:87.10px;white-space:pre;color:#000;font-family:'Liberation Sans', sans-serif;font-size:16.5px;line-height:16.5px;font-weight:400;font-style:normal;transform:scaleX(0.8714);transform-origin:0 0;">0.0</div>
<div style="position:absolute;left:916px;top:112px;width:72px;height:24px;background:#ffffff;border:1px solid #a0a0a0;box-sizing:border-box"></div>
<div style="position:absolute;left:917px;top:113px;width:70px;height:22px;border:1px solid #e8e8e8;box-sizing:border-box"></div>
<div style="position:absolute;left:968px;top:114px;width:17px;height:10px;background:#fafafa;border-right:1px solid #d8d8d8;border-bottom:1px solid #d0d0d0;border-left:1px solid #e4e4e4;box-sizing:border-box"></div>
<div style="position:absolute;left:968px;top:124px;width:17px;height:10px;background:#fafafa;border-right:1px solid #d8d8d8;border-bottom:1px solid #d0d0d0;border-left:1px solid #e4e4e4;box-sizing:border-box"></div>
<svg style="position:absolute;left:968px;top:112px" width="17" height="24" viewBox="0 0 17 24"><path d="M4.5,9.5 L8.5,5 L12.5,9.5 Z" fill="#000000"/><path d="M4.5,14.5 L8.5,19 L12.5,14.5 Z" fill="#000000"/></svg>
<div style="position:absolute;left:917.53px;top:114.10px;white-space:pre;color:#000;font-family:'Liberation Sans', sans-serif;font-size:16.5px;line-height:16.5px;font-weight:400;font-style:normal;transform:scaleX(0.8714);transform-origin:0 0;">0.0</div>
<div style="position:absolute;left:916px;top:146px;width:72px;height:24px;background:#f0f0f0;border:1px solid #c4c4c4;box-sizing:border-box"></div>
<div style="position:absolute;left:917px;top:147px;width:70px;height:22px;border:1px solid #f0f0f0;box-sizing:border-box"></div>
<div style="position:absolute;left:968px;top:148px;width:17px;height:10px;background:#f0f0f0;border-right:1px solid #d8d8d8;border-bottom:1px solid #d0d0d0;border-left:1px solid #e4e4e4;box-sizing:border-box"></div>
<div style="position:absolute;left:968px;top:158px;width:17px;height:10px;background:#f0f0f0;border-right:1px solid #d8d8d8;border-bottom:1px solid #d0d0d0;border-left:1px solid #e4e4e4;box-sizing:border-box"></div>
<svg style="position:absolute;left:968px;top:146px" width="17" height="24" viewBox="0 0 17 24"><path d="M4.5,9.5 L8.5,5 L12.5,9.5 Z" fill="#a8a8a8"/><path d="M4.5,14.5 L8.5,19 L12.5,14.5 Z" fill="#a8a8a8"/></svg>
<div style="position:absolute;left:917.64px;top:148.10px;white-space:pre;color:#8c8c8c;font-family:'Liberation Sans', sans-serif;font-size:16.5px;line-height:16.5px;font-weight:400;font-style:normal;transform:scaleX(0.7581);transform-origin:0 0;">17.8</div>
<div style="position:absolute;left:916px;top:174px;width:72px;height:24px;background:#f0f0f0;border:1px solid #c4c4c4;box-sizing:border-box"></div>
<div style="position:absolute;left:917px;top:175px;width:70px;height:22px;border:1px solid #f0f0f0;box-sizing:border-box"></div>
<div style="position:absolute;left:968px;top:176px;width:17px;height:10px;background:#f0f0f0;border-right:1px solid #d8d8d8;border-bottom:1px solid #d0d0d0;border-left:1px solid #e4e4e4;box-sizing:border-box"></div>
<div style="position:absolute;left:968px;top:186px;width:17px;height:10px;background:#f0f0f0;border-right:1px solid #d8d8d8;border-bottom:1px solid #d0d0d0;border-left:1px solid #e4e4e4;box-sizing:border-box"></div>
<svg style="position:absolute;left:968px;top:174px" width="17" height="24" viewBox="0 0 17 24"><path d="M4.5,9.5 L8.5,5 L12.5,9.5 Z" fill="#a8a8a8"/><path d="M4.5,14.5 L8.5,19 L12.5,14.5 Z" fill="#a8a8a8"/></svg>
<div style="position:absolute;left:917.64px;top:176.10px;white-space:pre;color:#8c8c8c;font-family:'Liberation Sans', sans-serif;font-size:16.5px;line-height:16.5px;font-weight:400;font-style:normal;transform:scaleX(0.7581);transform-origin:0 0;">17.8</div>
<div style="position:absolute;left:916px;top:201px;width:72px;height:24px;background:#f0f0f0;border:1px solid #c4c4c4;box-sizing:border-box"></div>
<div style="position:absolute;left:917px;top:202px;width:70px;height:22px;border:1px solid #f0f0f0;box-sizing:border-box"></div>
<div style="position:absolute;left:968px;top:203px;width:17px;height:10px;background:#f0f0f0;border-right:1px solid #d8d8d8;border-bottom:1px solid #d0d0d0;border-left:1px solid #e4e4e4;box-sizing:border-box"></div>
<div style="position:absolute;left:968px;top:213px;width:17px;height:10px;background:#f0f0f0;border-right:1px solid #d8d8d8;border-bottom:1px solid #d0d0d0;border-left:1px solid #e4e4e4;box-sizing:border-box"></div>
<svg style="position:absolute;left:968px;top:201px" width="17" height="24" viewBox="0 0 17 24"><path d="M4.5,9.5 L8.5,5 L12.5,9.5 Z" fill="#a8a8a8"/><path d="M4.5,14.5 L8.5,19 L12.5,14.5 Z" fill="#a8a8a8"/></svg>
<div style="position:absolute;left:917.53px;top:203.10px;white-space:pre;color:#8c8c8c;font-family:'Liberation Sans', sans-serif;font-size:16.5px;line-height:16.5px;font-weight:400;font-style:normal;transform:scaleX(0.8714);transform-origin:0 0;">0.0</div>
<svg style="position:absolute;left:1003px;top:88px" width="16" height="16" viewBox="0 0 16 16"><rect x="0" y="0" width="16" height="16" rx="3" fill="#005fb8"/><path d="M4.2,8.3 L6.8,10.8 L11.8,5.6" fill="none" stroke="#ffffff" stroke-width="1.2"/></svg>
<svg style="position:absolute;left:1003px;top:116px" width="16" height="16" viewBox="0 0 16 16"><rect x="0" y="0" width="16" height="16" rx="3" fill="#005fb8"/><path d="M4.2,8.3 L6.8,10.8 L11.8,5.6" fill="none" stroke="#ffffff" stroke-width="1.2"/></svg>
<div style="position:absolute;left:1026.40px;top:90.50px;white-space:pre;color:#000;font-family:'Liberation Sans', sans-serif;font-size:12px;line-height:12px;font-weight:400;font-style:normal;transform:scaleX(0.9667);transform-origin:0 0;">---</div>
<div style="position:absolute;left:1026.40px;top:118.30px;white-space:pre;color:#000;font-family:'Liberation Sans', sans-serif;font-size:12px;line-height:12px;font-weight:400;font-style:normal;transform:scaleX(0.9667);transform-origin:0 0;">---</div>
<svg style="position:absolute;left:1003px;top:150px" width="16" height="16" viewBox="0 0 16 16"><rect x="0.5" y="0.5" width="15" height="15" rx="3" fill="#f8f8f8" stroke="#d2d2d2" stroke-width="1"/></svg>
<svg style="position:absolute;left:1003px;top:177px" width="16" height="16" viewBox="0 0 16 16"><rect x="0.5" y="0.5" width="15" height="15" rx="3" fill="#f8f8f8" stroke="#d2d2d2" stroke-width="1"/></svg>
<svg style="position:absolute;left:1003px;top:204px" width="16" height="16" viewBox="0 0 16 16"><rect x="0.5" y="0.5" width="15" height="15" rx="3" fill="#f8f8f8" stroke="#d2d2d2" stroke-width="1"/></svg>
<div style="position:absolute;left:1027.00px;top:151.40px;white-space:pre;color:#a0a0a0;font-family:'Liberation Sans', sans-serif;font-size:14px;line-height:14px;font-weight:400;font-style:normal;transform:scaleX(0.9474);transform-origin:0 0;">0.0</div>
<div style="position:absolute;left:1027.00px;top:178.50px;white-space:pre;color:#a0a0a0;font-family:'Liberation Sans', sans-serif;font-size:14px;line-height:14px;font-weight:400;font-style:normal;transform:scaleX(0.9474);transform-origin:0 0;">0.0</div>
<div style="position:absolute;left:1027.00px;top:205.50px;white-space:pre;color:#a0a0a0;font-family:'Liberation Sans', sans-serif;font-size:14px;line-height:14px;font-weight:400;font-style:normal;transform:scaleX(0.9474);transform-origin:0 0;">0.0</div>
<div style="position:absolute;left:1078.54px;top:90.80px;white-space:pre;color:#000;font-family:'Liberation Sans', sans-serif;font-size:14px;line-height:14px;font-weight:400;font-style:normal;transform:scaleX(0.9644);transform-origin:0 0;">Mass X</div>
<div style="position:absolute;left:1078.54px;top:118.70px;white-space:pre;color:#000;font-family:'Liberation Sans', sans-serif;font-size:14px;line-height:14px;font-weight:400;font-style:normal;transform:scaleX(0.9644);transform-origin:0 0;">Mass Y</div>
<div style="position:absolute;left:1131px;top:85px;width:72px;height:24px;background:#ffffff;border:1px solid #a0a0a0;box-sizing:border-box"></div>
<div style="position:absolute;left:1132px;top:86px;width:70px;height:22px;border:1px solid #e8e8e8;box-sizing:border-box"></div>
<div style="position:absolute;left:1183px;top:87px;width:17px;height:10px;background:#fafafa;border-right:1px solid #d8d8d8;border-bottom:1px solid #d0d0d0;border-left:1px solid #e4e4e4;box-sizing:border-box"></div>
<div style="position:absolute;left:1183px;top:97px;width:17px;height:10px;background:#fafafa;border-right:1px solid #d8d8d8;border-bottom:1px solid #d0d0d0;border-left:1px solid #e4e4e4;box-sizing:border-box"></div>
<svg style="position:absolute;left:1183px;top:85px" width="17" height="24" viewBox="0 0 17 24"><path d="M4.5,9.5 L8.5,5 L12.5,9.5 Z" fill="#000000"/><path d="M4.5,14.5 L8.5,19 L12.5,14.5 Z" fill="#000000"/></svg>
<div style="position:absolute;left:1132.53px;top:87.10px;white-space:pre;color:#000;font-family:'Liberation Sans', sans-serif;font-size:16.5px;line-height:16.5px;font-weight:400;font-style:normal;transform:scaleX(0.8714);transform-origin:0 0;">0.0</div>
<div style="position:absolute;left:1131px;top:112px;width:72px;height:24px;background:#ffffff;border:1px solid #a0a0a0;box-sizing:border-box"></div>
<div style="position:absolute;left:1132px;top:113px;width:70px;height:22px;border:1px solid #e8e8e8;box-sizing:border-box"></div>
<div style="position:absolute;left:1183px;top:114px;width:17px;height:10px;background:#fafafa;border-right:1px solid #d8d8d8;border-bottom:1px solid #d0d0d0;border-left:1px solid #e4e4e4;box-sizing:border-box"></div>
<div style="position:absolute;left:1183px;top:124px;width:17px;height:10px;background:#fafafa;border-right:1px solid #d8d8d8;border-bottom:1px solid #d0d0d0;border-left:1px solid #e4e4e4;box-sizing:border-box"></div>
<svg style="position:absolute;left:1183px;top:112px" width="17" height="24" viewBox="0 0 17 24"><path d="M4.5,9.5 L8.5,5 L12.5,9.5 Z" fill="#000000"/><path d="M4.5,14.5 L8.5,19 L12.5,14.5 Z" fill="#000000"/></svg>
<div style="position:absolute;left:1132.53px;top:114.10px;white-space:pre;color:#000;font-family:'Liberation Sans', sans-serif;font-size:16.5px;line-height:16.5px;font-weight:400;font-style:normal;transform:scaleX(0.8714);transform-origin:0 0;">0.0</div>
<div style="position:absolute;left:1120.06px;top:140.00px;white-space:pre;color:#a8a8a8;font-family:'Liberation Sans', sans-serif;font-size:10px;line-height:10px;font-weight:400;font-style:normal;transform:scaleX(0.9448);transform-origin:0 0;">Shape model</div>
<svg style="position:absolute;left:1184px;top:137px" width="16" height="16" viewBox="0 0 16 16"><rect x="0.5" y="0.5" width="15" height="15" rx="3" fill="#f8f8f8" stroke="#d2d2d2" stroke-width="1"/></svg>
<div style="position:absolute;left:1096.81px;top:157.30px;white-space:pre;color:#006400;font-family:'Liberation Sans', sans-serif;font-size:13.5px;line-height:13.5px;font-weight:400;font-style:normal;transform:scaleX(0.9875);transform-origin:0 0;">dia = 17.8 km</div>
<div style="position:absolute;left:1073.69px;top:174.60px;white-space:pre;color:#0000e0;font-family:'Liberation Sans', sans-serif;font-size:13.5px;line-height:13.5px;font-weight:400;font-style:normal;transform:scaleX(1.0087);transform-origin:0 0;">a/b: 1.00, dMag: 0.00</div>
<div style="position:absolute;left:1078.55px;top:211.20px;white-space:pre;color:#000;font-family:'Liberation Sans', sans-serif;font-size:14px;line-height:14px;font-weight:400;font-style:normal;transform:scaleX(0.9470);transform-origin:0 0;">Motion: 23.03 km/s</div>
<svg style="position:absolute;left:795px;top:238px" width="16" height="16" viewBox="0 0 16 16"><rect x="0" y="0" width="16" height="16" rx="3" fill="#005fb8"/><path d="M4.2,8.3 L6.8,10.8 L11.8,5.6" fill="none" stroke="#ffffff" stroke-width="1.2"/></svg>
<div style="position:absolute;left:817.56px;top:239.90px;white-space:pre;color:#000;font-family:'Liberation Sans', sans-serif;font-size:14px;line-height:14px;font-weight:400;font-style:normal;transform:scaleX(0.9383);transform-origin:0 0;">Circular</div>
<svg style="position:absolute;left:878px;top:238px" width="16" height="16" viewBox="0 0 16 16"><rect x="0" y="0" width="16" height="16" rx="3" fill="#005fb8"/><path d="M4.2,8.3 L6.8,10.8 L11.8,5.6" fill="none" stroke="#ffffff" stroke-width="1.2"/></svg>
<div style="position:absolute;left:901.01px;top:232.10px;white-space:pre;color:#000;font-family:'Liberation Sans', sans-serif;font-size:13px;line-height:13px;font-weight:400;font-style:normal;transform:scaleX(0.9949);transform-origin:0 0;">Use assumed</div>
<div style="position:absolute;left:902.00px;top:248.10px;white-space:pre;color:#000;font-family:'Liberation Sans', sans-serif;font-size:13px;line-height:13px;font-weight:400;font-style:normal;">dia (17.8 km)</div>
<svg style="position:absolute;left:1005px;top:238px" width="16" height="16" viewBox="0 0 16 16"><rect x="0.5" y="0.5" width="15" height="15" rx="3" fill="#f7f7f7" stroke="#3a3a3a" stroke-width="1"/></svg>
<div style="position:absolute;left:1028.34px;top:239.00px;white-space:pre;color:#000;font-family:'Liberation Sans', sans-serif;font-size:14px;line-height:14px;font-weight:400;font-style:normal;transform:scaleX(0.9566);transform-origin:0 0;">Include Miss events</div>
<div style="position:absolute;left:794px;top:272px;width:402px;height:25px;background:#f0f0f0;border-top:2px solid #a0a0a0;border-left:2px solid #a0a0a0;border-bottom:1px solid #ffffff;border-right:1px solid #ffffff;box-sizing:border-box"></div>
<div style="position:absolute;left:794px;top:272px;width:402px;height:1px;background:#696969"></div>
<div style="position:absolute;left:794px;top:272px;width:1px;height:25px;background:#696969"></div>
<div style="position:absolute;left:802.63px;top:276.40px;white-space:pre;color:#a8a8a8;font-family:'Liberation Sans', sans-serif;font-size:15px;line-height:15px;font-weight:700;font-style:normal;transform:scaleX(0.9746);transform-origin:0 0;">Double stars - show</div>
<svg style="position:absolute;left:961px;top:277px" width="16" height="16" viewBox="0 0 16 16"><circle cx="8" cy="8" r="8" fill="#c4c4c4"/><circle cx="8" cy="8" r="3.6" fill="#ffffff"/></svg>
<div style="position:absolute;left:981.96px;top:281.00px;white-space:pre;color:#a8a8a8;font-family:'Liberation Sans', sans-serif;font-size:12px;line-height:12px;font-weight:400;font-style:normal;transform:scaleX(1.0435);transform-origin:0 0;">Both</div>
<svg style="position:absolute;left:1025px;top:277px" width="16" height="16" viewBox="0 0 16 16"><circle cx="8" cy="8" r="7.5" fill="#f5f5f5" stroke="#c8c8c8" stroke-width="1"/></svg>
<div style="position:absolute;left:1047.03px;top:281.00px;white-space:pre;color:#a8a8a8;font-family:'Liberation Sans', sans-serif;font-size:12px;line-height:12px;font-weight:400;font-style:normal;transform:scaleX(0.9750);transform-origin:0 0;">Primary</div>
<svg style="position:absolute;left:1107px;top:277px" width="16" height="16" viewBox="0 0 16 16"><circle cx="8" cy="8" r="7.5" fill="#f5f5f5" stroke="#c8c8c8" stroke-width="1"/></svg>
<div style="position:absolute;left:1128.03px;top:281.00px;white-space:pre;color:#a8a8a8;font-family:'Liberation Sans', sans-serif;font-size:12px;line-height:12px;font-weight:400;font-style:normal;transform:scaleX(0.9732);transform-origin:0 0;">Secondary</div>
<div style="position:absolute;left:792.49px;top:312.70px;white-space:pre;color:#006400;font-family:'Liberation Sans', sans-serif;font-size:15px;line-height:15px;font-weight:700;font-style:normal;transform:scaleX(1.1080);transform-origin:0 0;">Quality of the fit</div>
<div style="position:absolute;left:926px;top:305px;width:270px;height:25px;background:#ffffff;border:1px solid #7a7a7a;border-radius:3px;box-sizing:border-box"></div>
<div style="position:absolute;left:930.00px;top:309.70px;white-space:pre;color:#000;font-family:'Liberation Sans', sans-serif;font-size:14px;line-height:14px;font-weight:400;font-style:normal;transform:scaleX(0.9186);transform-origin:0 0;">Astrometry only. No reliable size</div>
<svg style="position:absolute;left:1178px;top:312px" width="14" height="12" viewBox="0 0 14 12"><path d="M2,3.5 L7,8.5 L12,3.5" fill="none" stroke="#303030" stroke-width="1.1"/></svg>
<div style="position:absolute;left:824.98px;top:337.50px;white-space:pre;color:#800000;font-family:'Liberation Sans', sans-serif;font-size:15px;line-height:15px;font-weight:700;font-style:normal;transform:scaleX(1.0169);transform-origin:0 0;">Review flags</div>
<div style="position:absolute;left:926px;top:333px;width:269px;height:23px;background:#e0ffff;border-top:2px solid #a0a0a0;border-left:2px solid #a0a0a0;box-sizing:border-box"></div>
<svg style="position:absolute;left:932px;top:337px" width="16" height="16" viewBox="0 0 16 16"><rect x="0.5" y="0.5" width="15" height="15" rx="3" fill="#f7f7f7" stroke="#3a3a3a" stroke-width="1"/></svg>
<div style="position:absolute;left:954.98px;top:337.20px;white-space:pre;color:#000;font-family:'Liberation Sans', sans-serif;font-size:15px;line-height:15px;font-weight:400;font-style:normal;transform:scaleX(1.0156);transform-origin:0 0;">0 items are tagged for review</div>
<div style="position:absolute;left:782px;top:360px;width:423px;height:101px;background:#f0ffff;border-top:2px solid #a0a0a0;border-left:2px solid #a0a0a0;border-right:1px solid #ffffff;border-bottom:1px solid #ffffff;box-sizing:border-box"></div>
<div style="position:absolute;left:782px;top:360px;width:423px;height:1px;background:#696969"></div>
<div style="position:absolute;left:782px;top:360px;width:1px;height:101px;background:#696969"></div>
<div style="position:absolute;left:790.70px;top:380.50px;white-space:pre;color:#6e0a20;font-family:'Liberation Sans', sans-serif;font-size:15px;line-height:15px;font-weight:700;font-style:normal;">P</div>
<div style="position:absolute;left:790.70px;top:396.20px;white-space:pre;color:#6e0a20;font-family:'Liberation Sans', sans-serif;font-size:15px;line-height:15px;font-weight:700;font-style:normal;">L</div>
<div style="position:absolute;left:789.50px;top:413.00px;white-space:pre;color:#6e0a20;font-family:'Liberation Sans', sans-serif;font-size:15px;line-height:15px;font-weight:700;font-style:normal;">O</div>
<div style="position:absolute;left:791.70px;top:429.00px;white-space:pre;color:#6e0a20;font-family:'Liberation Sans', sans-serif;font-size:15px;line-height:15px;font-weight:700;font-style:normal;">T</div>
<div style="position:absolute;left:816.86px;top:374.90px;white-space:pre;color:#6e0a20;font-family:'Liberation Sans', sans-serif;font-size:16px;line-height:16px;font-weight:700;font-style:normal;transform:scaleX(0.9390);transform-origin:0 0;">Scale</div>
<div style="position:absolute;left:816.88px;top:407.70px;white-space:pre;color:#6e0a20;font-family:'Liberation Sans', sans-serif;font-size:16px;line-height:16px;font-weight:700;font-style:normal;transform:scaleX(0.9194);transform-origin:0 0;">Size</div>
<div style="position:absolute;left:817.46px;top:439.40px;white-space:pre;color:#6e0a20;font-family:'Liberation Sans', sans-serif;font-size:16px;line-height:16px;font-weight:700;font-style:normal;transform:scaleX(0.9441);transform-origin:0 0;">Scroll range x1.25</div>
<div style="position:absolute;left:866px;top:371px;width:336px;height:23px;background:#fff8cc"></div>
<div style="position:absolute;left:871px;top:377px;width:323px;height:5px;background:#e7e7e7;border:1px solid #d4d4d4;border-radius:2px;box-sizing:border-box"></div>
<svg style="position:absolute;left:0;top:0" width="1212" height="831" viewBox="0 0 1212 831"><rect x="876.4" y="389" width="1" height="4" fill="#a8a8a8"/><rect x="892.2" y="389" width="1" height="4" fill="#a8a8a8"/><rect x="907.9" y="389" width="1" height="4" fill="#a8a8a8"/><rect x="923.7" y="389" width="1" height="4" fill="#a8a8a8"/><rect x="939.5" y="389" width="1" height="4" fill="#a8a8a8"/><rect x="955.2" y="389" width="1" height="4" fill="#a8a8a8"/><rect x="971.0" y="389" width="1" height="4" fill="#a8a8a8"/><rect x="986.8" y="389" width="1" height="4" fill="#a8a8a8"/><rect x="1002.6" y="389" width="1" height="4" fill="#a8a8a8"/><rect x="1018.3" y="389" width="1" height="4" fill="#a8a8a8"/><rect x="1034.1" y="389" width="1" height="4" fill="#a8a8a8"/><rect x="1049.9" y="389" width="1" height="4" fill="#a8a8a8"/><rect x="1065.6" y="389" width="1" height="4" fill="#a8a8a8"/><rect x="1081.4" y="389" width="1" height="4" fill="#a8a8a8"/><rect x="1097.2" y="389" width="1" height="4" fill="#a8a8a8"/><rect x="1113.0" y="389" width="1" height="4" fill="#a8a8a8"/><rect x="1128.7" y="389" width="1" height="4" fill="#a8a8a8"/><rect x="1144.5" y="389" width="1" height="4" fill="#a8a8a8"/><rect x="1160.3" y="389" width="1" height="4" fill="#a8a8a8"/><rect x="1176.0" y="389" width="1" height="4" fill="#a8a8a8"/><rect x="1191.8" y="389" width="1" height="4" fill="#a8a8a8"/><path d="M1034.7,375 Q1034.7,374 1035.7,374 L1042.7,374 Q1043.7,374 1043.7,375 L1043.7,383 L1039.2,387 L1034.7,383 Z" fill="#0067c0"/></svg>
<div style="position:absolute;left:854px;top:402px;width:204px;height:28px;background:#f0fff0;border-top:2px solid #a0a0a0;border-left:2px solid #a0a0a0;border-right:1px solid #ffffff;border-bottom:1px solid #ffffff;box-sizing:border-box"></div>
<div style="position:absolute;left:854px;top:402px;width:204px;height:1px;background:#696969"></div>
<div style="position:absolute;left:854px;top:402px;width:1px;height:28px;background:#696969"></div>
<svg style="position:absolute;left:867px;top:408px" width="16" height="16" viewBox="0 0 16 16"><circle cx="8" cy="8" r="8" fill="#005fb8"/><circle cx="8" cy="8" r="3.6" fill="#ffffff"/></svg>
<div style="position:absolute;left:889.12px;top:408.00px;white-space:pre;color:#6e0a20;font-family:'Liberation Sans', sans-serif;font-size:16px;line-height:16px;font-weight:700;font-style:normal;transform:scaleX(0.8750);transform-origin:0 0;">normal</div>
<svg style="position:absolute;left:947px;top:408px" width="16" height="16" viewBox="0 0 16 16"><circle cx="8" cy="8" r="7.5" fill="#f3f3f3" stroke="#3a3a3a" stroke-width="1"/></svg>
<div style="position:absolute;left:969.00px;top:408.00px;white-space:pre;color:#6e0a20;font-family:'Liberation Sans', sans-serif;font-size:16px;line-height:16px;font-weight:700;font-style:normal;transform:scaleX(1.0273);transform-origin:0 0;">x 2</div>
<svg style="position:absolute;left:1002px;top:408px" width="16" height="16" viewBox="0 0 16 16"><circle cx="8" cy="8" r="7.5" fill="#f3f3f3" stroke="#3a3a3a" stroke-width="1"/></svg>
<div style="position:absolute;left:1024.80px;top:408.00px;white-space:pre;color:#6e0a20;font-family:'Liberation Sans', sans-serif;font-size:16px;line-height:16px;font-weight:700;font-style:normal;transform:scaleX(1.0091);transform-origin:0 0;">x 5</div>
<div style="position:absolute;left:1085.25px;top:408.40px;white-space:pre;color:#800080;font-family:'Liberation Sans', sans-serif;font-size:15px;line-height:15px;font-weight:700;font-style:normal;transform:scaleX(0.9548);transform-origin:0 0;">Form opacity</div>
<svg style="position:absolute;left:957px;top:440px" width="16" height="16" viewBox="0 0 16 16"><rect x="0.5" y="0.5" width="15" height="15" rx="3" fill="#f7f7f7" stroke="#3a3a3a" stroke-width="1"/></svg>
<div style="position:absolute;left:1059px;top:431px;width:144px;height:26px;background:#fff8cc"></div>
<div style="position:absolute;left:1067px;top:438.5px;width:128px;height:5px;background:#e7e7e7;border:1px solid #d4d4d4;border-radius:2px;box-sizing:border-box"></div>
<svg style="position:absolute;left:0;top:0" width="1212" height="831" viewBox="0 0 1212 831"><rect x="1072.4" y="452" width="1" height="4" fill="#a8a8a8"/><rect x="1095.9" y="452" width="1" height="4" fill="#a8a8a8"/><rect x="1119.7" y="452" width="1" height="4" fill="#a8a8a8"/><rect x="1142.4" y="452" width="1" height="4" fill="#a8a8a8"/><rect x="1165.8" y="452" width="1" height="4" fill="#a8a8a8"/><rect x="1189.6" y="452" width="1" height="4" fill="#a8a8a8"/><path d="M1184.5,434 Q1184.5,433 1185.5,433 L1192.5,433 Q1193.5,433 1193.5,434 L1193.5,445 L1189,449 L1184.5,445 Z" fill="#0067c0"/></svg>
<div style="position:absolute;left:762px;top:451px;width:1px;height:21px;background:#505050"></div>
<div style="position:absolute;left:798.54px;top:477.60px;white-space:pre;color:#000;font-family:'Liberation Sans', sans-serif;font-size:14px;line-height:14px;font-weight:400;font-style:normal;transform:scaleX(0.9612);transform-origin:0 0;">RMS fit 1.5 ±0.0 km</div>
<div style="position:absolute;left:790px;top:502px;width:409px;height:300px;background:#ffffff;border-top:2px solid #a0a0a0;border-left:2px solid #a0a0a0;border-right:1px solid #e8e8e8;border-bottom:1px solid #e8e8e8;box-sizing:border-box"></div>
<div style="position:absolute;left:790px;top:502px;width:409px;height:1px;background:#696969"></div>
<div style="position:absolute;left:790px;top:502px;width:1px;height:300px;background:#696969"></div>
<svg style="position:absolute;left:0;top:0" width="1212" height="831" viewBox="0 0 1212 831"><circle cx="801.2" cy="512.7" r="1.8" fill="none" stroke="#ff60c0" stroke-width="1"/><circle cx="819.9" cy="512.7" r="1.8" fill="none" stroke="#ff60c0" stroke-width="1"/><circle cx="838.6" cy="512.7" r="1.8" fill="none" stroke="#ff60c0" stroke-width="1"/><circle cx="857.3" cy="512.7" r="1.8" fill="none" stroke="#ff60c0" stroke-width="1"/><circle cx="876" cy="512.7" r="1.8" fill="none" stroke="#ff60c0" stroke-width="1"/><line x1="800.5" y1="527" x2="878" y2="527" stroke="#ff0000" stroke-width="5" stroke-linecap="round"/></svg>
<div style="position:absolute;left:908.10px;top:507.40px;white-space:pre;color:#000;font-family:'Liberation Mono', monospace;font-size:15px;line-height:15px;font-weight:400;font-style:normal;letter-spacing:1.4px;">1(P) Predicted</div>
<div style="position:absolute;left:908.10px;top:522.50px;white-space:pre;color:#000;font-family:'Liberation Mono', monospace;font-size:15px;line-height:15px;font-weight:400;font-style:normal;letter-spacing:1.4px;">2    J Dunham, near Fountain</div>
<div style="position:absolute;left:627px;top:628px;width:562px;height:171px;background:#b0c4de;border-top:1px solid #808080;border-left:1px solid #808080;border-right:1px solid #404040;border-bottom:1px solid #404040;box-sizing:border-box"></div>
<div style="position:absolute;left:628px;top:629px;width:560px;height:1px;background:#c8d8f0"></div>
<div style="position:absolute;left:628px;top:629px;width:1px;height:169px;background:#c8d8f0"></div>
<div style="position:absolute;left:629.17px;top:637.50px;white-space:pre;color:#253c64;font-family:'Liberation Sans', sans-serif;font-size:15px;line-height:15px;font-weight:700;font-style:normal;transform:scaleX(1.0348);transform-origin:0 0;">DAMIT</div>
<div style="position:absolute;left:685px;top:633px;width:18px;height:22px;background:#f0f0f0;border:1px solid #ffffff;border-radius:4px;box-sizing:border-box"></div>
<div style="position:absolute;left:687.5px;top:635.8px;width:13px;height:16.5px;background:#00e000"></div>
<div style="position:absolute;left:688.70px;top:637.00px;white-space:pre;color:#000;font-family:'Liberation Sans', sans-serif;font-size:15px;line-height:15px;font-weight:700;font-style:normal;">1</div>
<div style="position:absolute;left:707.1px;top:633px;width:19.0px;height:22px;background:#f0f0f0;border:1px solid #ffffff;border-radius:4px;box-sizing:border-box"></div>
<div style="position:absolute;left:711.30px;top:637.00px;white-space:pre;color:#a0a0a0;font-family:'Liberation Sans', sans-serif;font-size:15px;line-height:15px;font-weight:400;font-style:normal;">2</div>
<div style="position:absolute;left:729.2px;top:633px;width:19.0px;height:22px;background:#f0f0f0;border:1px solid #ffffff;border-radius:4px;box-sizing:border-box"></div>
<div style="position:absolute;left:733.40px;top:637.00px;white-space:pre;color:#a0a0a0;font-family:'Liberation Sans', sans-serif;font-size:15px;line-height:15px;font-weight:400;font-style:normal;">3</div>
<div style="position:absolute;left:752px;top:633px;width:19px;height:22px;background:#f0f0f0;border:1px solid #ffffff;border-radius:4px;box-sizing:border-box"></div>
<div style="position:absolute;left:757.20px;top:637.00px;white-space:pre;color:#a0a0a0;font-family:'Liberation Sans', sans-serif;font-size:15px;line-height:15px;font-weight:400;font-style:normal;">4</div>
<div style="position:absolute;left:774.8px;top:633px;width:19.0px;height:22px;background:#f0f0f0;border:1px solid #ffffff;border-radius:4px;box-sizing:border-box"></div>
<div style="position:absolute;left:779.00px;top:637.00px;white-space:pre;color:#a0a0a0;font-family:'Liberation Sans', sans-serif;font-size:15px;line-height:15px;font-weight:400;font-style:normal;">5</div>
<div style="position:absolute;left:797px;top:633px;width:19px;height:22px;background:#f0f0f0;border:1px solid #ffffff;border-radius:4px;box-sizing:border-box"></div>
<div style="position:absolute;left:801.20px;top:637.00px;white-space:pre;color:#a0a0a0;font-family:'Liberation Sans', sans-serif;font-size:15px;line-height:15px;font-weight:400;font-style:normal;">6</div>
<div style="position:absolute;left:824px;top:633px;width:88px;height:22.5px;background:#ffffff;border-radius:4px"></div>
<div style="position:absolute;left:826.7px;top:636.2px;width:82.5px;height:16.5px;background:#aeeaea"></div>
<div style="position:absolute;left:829.53px;top:637.40px;white-space:pre;color:#000;font-family:'Liberation Sans', sans-serif;font-size:14px;line-height:14px;font-weight:400;font-style:normal;transform:scaleX(0.9703);transform-origin:0 0;">Light curves</div>
<div style="position:absolute;left:919.09px;top:637.50px;white-space:pre;color:#253c64;font-family:'Liberation Sans', sans-serif;font-size:15px;line-height:15px;font-weight:700;font-style:normal;transform:scaleX(1.0083);transform-origin:0 0;">ISAM</div>
<div style="position:absolute;left:965px;top:632.5px;width:19.5px;height:23.0px;background:#f0f0f0;border:1px solid #ffffff;border-radius:4px;box-sizing:border-box"></div>
<div style="position:absolute;left:969.45px;top:637.00px;white-space:pre;color:#a0a0a0;font-family:'Liberation Sans', sans-serif;font-size:15px;line-height:15px;font-weight:400;font-style:normal;">1</div>
<div style="position:absolute;left:994.4px;top:632.5px;width:19.5px;height:23.0px;background:#f0f0f0;border:1px solid #ffffff;border-radius:4px;box-sizing:border-box"></div>
<div style="position:absolute;left:998.85px;top:637.00px;white-space:pre;color:#a0a0a0;font-family:'Liberation Sans', sans-serif;font-size:15px;line-height:15px;font-weight:400;font-style:normal;">2</div>
<div style="position:absolute;left:1024.4px;top:632.5px;width:19.5px;height:23.0px;background:#f0f0f0;border:1px solid #ffffff;border-radius:4px;box-sizing:border-box"></div>
<div style="position:absolute;left:1028.85px;top:637.00px;white-space:pre;color:#a0a0a0;font-family:'Liberation Sans', sans-serif;font-size:15px;line-height:15px;font-weight:400;font-style:normal;">3</div>
<div style="position:absolute;left:1054.3px;top:632.5px;width:19.5px;height:23.0px;background:#f0f0f0;border:1px solid #ffffff;border-radius:4px;box-sizing:border-box"></div>
<div style="position:absolute;left:1059.75px;top:637.00px;white-space:pre;color:#a0a0a0;font-family:'Liberation Sans', sans-serif;font-size:15px;line-height:15px;font-weight:400;font-style:normal;">4</div>
<div style="position:absolute;left:1084.3px;top:632.5px;width:19.5px;height:23.0px;background:#f0f0f0;border:1px solid #ffffff;border-radius:4px;box-sizing:border-box"></div>
<div style="position:absolute;left:1088.75px;top:637.00px;white-space:pre;color:#a0a0a0;font-family:'Liberation Sans', sans-serif;font-size:15px;line-height:15px;font-weight:400;font-style:normal;">5</div>
<div style="position:absolute;left:1114px;top:632.5px;width:19.5px;height:23.0px;background:#f0f0f0;border:1px solid #ffffff;border-radius:4px;box-sizing:border-box"></div>
<div style="position:absolute;left:1118.45px;top:637.00px;white-space:pre;color:#a0a0a0;font-family:'Liberation Sans', sans-serif;font-size:15px;line-height:15px;font-weight:400;font-style:normal;">6</div>
<div style="position:absolute;left:1145.6px;top:632.8px;width:17.5px;height:20.5px;background:#ffffff;border-radius:3px"></div>
<div style="position:absolute;left:1148px;top:634.4px;width:12.5px;height:16.2px;background:#2020b0"></div>
<div style="position:absolute;left:1149.43px;top:636.50px;white-space:pre;color:#ffff00;font-family:'Liberation Sans', sans-serif;font-size:14px;line-height:14px;font-weight:700;font-style:normal;transform:scaleX(1.0714);transform-origin:0 0;">?</div>
<div style="position:absolute;left:1165.7px;top:632.8px;width:18.5px;height:20.5px;background:#ffffff;border-radius:3px"></div>
<div style="position:absolute;left:1168px;top:634.4px;width:13.5px;height:16.2px;background:#dc143c"></div>
<div style="position:absolute;left:1169.50px;top:636.50px;white-space:pre;color:#ffffff;font-family:'Liberation Sans', sans-serif;font-size:14px;line-height:14px;font-weight:700;font-style:normal;transform:scaleX(1.1444);transform-origin:0 0;">X</div>
<div style="position:absolute;left:636.35px;top:658.30px;white-space:pre;color:#2c3e5c;font-family:'Liberation Sans', sans-serif;font-size:14px;line-height:14px;font-weight:400;font-style:normal;transform:scaleX(0.9465);transform-origin:0 0;">Source</div>
<div style="position:absolute;left:709.85px;top:658.30px;white-space:pre;color:#2c3e5c;font-family:'Liberation Sans', sans-serif;font-size:14px;line-height:14px;font-weight:400;font-style:normal;transform:scaleX(0.9462);transform-origin:0 0;">ID</div>
<div style="position:absolute;left:752.28px;top:658.30px;white-space:pre;color:#2c3e5c;font-family:'Liberation Sans', sans-serif;font-size:14px;line-height:14px;font-weight:400;font-style:normal;transform:scaleX(1.0191);transform-origin:0 0;">Surf/Vol</div>
<div style="position:absolute;left:634px;top:675.3px;width:48px;height:22.0px;background:#f0f0f0;border-top:1px solid #ffffff;border-left:1px solid #ffffff;border-right:1px solid #f8f8f8;border-bottom:2px solid #a0a0a0;border-radius:3px;box-sizing:border-box"></div>
<div style="position:absolute;left:684.7px;top:675.3px;width:66.5px;height:22.0px;background:#f0f0f0;border-top:1px solid #ffffff;border-left:1px solid #ffffff;border-right:1px solid #f8f8f8;border-bottom:2px solid #a0a0a0;border-radius:3px;box-sizing:border-box"></div>
<div style="position:absolute;left:753.3px;top:675.3px;width:47.40000000000009px;height:22.0px;background:#f0f0f0;border-top:1px solid #ffffff;border-left:1px solid #ffffff;border-right:1px solid #f8f8f8;border-bottom:2px solid #a0a0a0;border-radius:3px;box-sizing:border-box"></div>
<div style="position:absolute;left:636.31px;top:679.80px;white-space:pre;color:#000;font-family:'Liberation Sans', sans-serif;font-size:14px;line-height:14px;font-weight:400;font-style:normal;transform:scaleX(0.9929);transform-origin:0 0;">DAMIT</div>
<div style="position:absolute;left:687.02px;top:679.80px;white-space:pre;color:#000;font-family:'Liberation Sans', sans-serif;font-size:14px;line-height:14px;font-weight:400;font-style:normal;transform:scaleX(0.9833);transform-origin:0 0;">8875</div>
<div style="position:absolute;left:756.85px;top:679.80px;white-space:pre;color:#000;font-family:'Liberation Sans', sans-serif;font-size:14px;line-height:14px;font-weight:400;font-style:normal;transform:scaleX(0.9471);transform-origin:0 0;">1.030</div>
<div style="position:absolute;left:630.7px;top:700px;width:42px;height:25.6px;background:#ffff00;border:1px solid #303030;border-bottom:2px solid #202020;border-right:2px solid #202020;box-sizing:border-box"></div>
<div style="position:absolute;left:639.02px;top:704.40px;white-space:pre;color:#000;font-family:'Liberation Sans', sans-serif;font-size:15px;line-height:15px;font-weight:700;font-style:normal;transform:scaleX(0.9826);transform-origin:0 0;">Dia</div>
<div style="position:absolute;left:676.87px;top:703.70px;white-space:pre;color:#2c3e5c;font-family:'Liberation Sans', sans-serif;font-size:14px;line-height:14px;font-weight:400;font-style:italic;transform:scaleX(0.9262);transform-origin:0 0;">Values in memory =&gt;</div>
<div style="position:absolute;left:804px;top:658.3px;width:377px;height:61px;background:#fff8d0;border-top:2px solid #a0a0a0;border-left:2px solid #808080;border-right:1px solid #ffffff;border-bottom:1px solid #ffffff;box-sizing:border-box"></div>
<div style="position:absolute;left:832.90px;top:659.50px;white-space:pre;color:#000;font-family:'Liberation Sans', sans-serif;font-size:14px;line-height:14px;font-weight:400;font-style:normal;transform:scaleX(0.9034);transform-origin:0 0;">Fit quality</div>
<div style="position:absolute;left:807.4px;top:676.4px;width:120px;height:25.3px;background:#ffffff;border:1px solid #7a7a7a;border-radius:3px;box-sizing:border-box"></div>
<div style="position:absolute;left:809.79px;top:680.60px;white-space:pre;color:#000;font-family:'Liberation Sans', sans-serif;font-size:14px;line-height:14px;font-weight:400;font-style:normal;transform:scaleX(0.9103);transform-origin:0 0;">Minimum dia</div>
<svg style="position:absolute;left:910px;top:683px" width="14" height="12" viewBox="0 0 14 12"><path d="M2,3.5 L7,8.5 L12,3.5" fill="none" stroke="#303030" stroke-width="1.1"/></svg>
<div style="position:absolute;left:809.80px;top:703.40px;white-space:pre;color:#602080;font-family:'Liberation Sans', sans-serif;font-size:14px;line-height:14px;font-weight:400;font-style:normal;transform:scaleX(0.8987);transform-origin:0 0;">Minimum dia</div>
<div style="position:absolute;left:930.21px;top:659.50px;white-space:pre;color:#000;font-family:'Liberation Sans', sans-serif;font-size:14px;line-height:14px;font-weight:400;font-style:normal;transform:scaleX(0.9900);transform-origin:0 0;">Ph Corn</div>
<div style="position:absolute;left:933.7px;top:676.4px;width:47.0px;height:22.5px;background:#f0f0f0;border-top:1px solid #ffffff;border-left:1px solid #ffffff;border-right:1px solid #f8f8f8;border-bottom:2px solid #a0a0a0;border-radius:3px;box-sizing:border-box"></div>
<div style="position:absolute;left:936.10px;top:680.60px;white-space:pre;color:#000;font-family:'Liberation Sans', sans-serif;font-size:14px;line-height:14px;font-weight:400;font-style:normal;transform:scaleX(1.0692);transform-origin:0 0;">0°</div>
<div style="position:absolute;left:936.10px;top:703.00px;white-space:pre;color:#602080;font-family:'Liberation Sans', sans-serif;font-size:14px;line-height:14px;font-weight:400;font-style:normal;transform:scaleX(1.0692);transform-origin:0 0;">0°</div>
<div style="position:absolute;left:994.09px;top:659.30px;white-space:pre;color:#000;font-family:'Liberation Sans', sans-serif;font-size:14px;line-height:14px;font-weight:400;font-style:normal;transform:scaleX(0.9077);transform-origin:0 0;">Minimum dia</div>
<div style="position:absolute;left:991.9px;top:676.5px;width:46.500000000000114px;height:23.5px;background:#f0f0f0;border-top:1px solid #ffffff;border-left:1px solid #ffffff;border-right:1px solid #f8f8f8;border-bottom:2px solid #a0a0a0;border-radius:3px;box-sizing:border-box"></div>
<div style="position:absolute;left:994.33px;top:680.70px;white-space:pre;color:#000;font-family:'Liberation Sans', sans-serif;font-size:14px;line-height:14px;font-weight:400;font-style:normal;transform:scaleX(0.9692);transform-origin:0 0;">15.7</div>
<div style="position:absolute;left:993.43px;top:702.80px;white-space:pre;color:#602080;font-family:'Liberation Sans', sans-serif;font-size:14px;line-height:14px;font-weight:400;font-style:normal;transform:scaleX(0.9654);transform-origin:0 0;">15.7</div>
<div style="position:absolute;left:1041.3px;top:676.5px;width:37.299999999999955px;height:28px;background:#ffffff;border:1px solid #e0e0e0;border-radius:4px;box-sizing:border-box"></div>
<div style="position:absolute;left:1044.0px;top:679.3px;width:31.899999999999956px;height:22.7px;background:#adff2f"></div>
<div style="position:absolute;left:1048.99px;top:683.60px;white-space:pre;color:#000;font-family:'Liberation Sans', sans-serif;font-size:14px;line-height:14px;font-weight:400;font-style:normal;transform:scaleX(0.9050);transform-origin:0 0;">Set</div>
<div style="position:absolute;left:1088.59px;top:660.00px;white-space:pre;color:#000;font-family:'Liberation Sans', sans-serif;font-size:14px;line-height:14px;font-weight:400;font-style:normal;transform:scaleX(0.9110);transform-origin:0 0;">Maximum dia</div>
<div style="position:absolute;left:1089.5px;top:676.5px;width:46px;height:23.5px;background:#ffc0cb;border-top:1px solid #ffffff;border-left:1px solid #ffffff;border-bottom:2px solid #a0a0a0;border-radius:3px;box-sizing:border-box"></div>
<div style="position:absolute;left:1138.9px;top:676.5px;width:37.299999999999955px;height:28px;background:#ffffff;border:1px solid #e0e0e0;border-radius:4px;box-sizing:border-box"></div>
<div style="position:absolute;left:1141.6000000000001px;top:679.3px;width:31.899999999999956px;height:22.7px;background:#adff2f"></div>
<div style="position:absolute;left:1146.60px;top:683.60px;white-space:pre;color:#000;font-family:'Liberation Sans', sans-serif;font-size:14px;line-height:14px;font-weight:400;font-style:normal;transform:scaleX(0.9050);transform-origin:0 0;">Set</div>
<div style="position:absolute;left:1090.49px;top:703.00px;white-space:pre;color:#000080;font-family:'Liberation Sans', sans-serif;font-size:14px;line-height:14px;font-weight:400;font-style:normal;transform:scaleX(0.9103);transform-origin:0 0;">- - - -</div>
<div style="position:absolute;left:757.13px;top:723.80px;white-space:pre;color:#000;font-family:'Liberation Sans', sans-serif;font-size:14px;line-height:14px;font-weight:700;font-style:normal;transform:scaleX(0.9721);transform-origin:0 0;letter-spacing:0.6px;">Chord(s) matched to longest path across the SM</div>
<div style="position:absolute;left:636.60px;top:744.10px;white-space:pre;color:#2c3e5c;font-family:'Liberation Sans', sans-serif;font-size:14px;line-height:14px;font-weight:400;font-style:normal;transform:scaleX(0.9274);transform-origin:0 0;">Version info</div>
<div style="position:absolute;left:712.4px;top:740.4px;width:336.1px;height:22.0px;background:#f0f0f0;border-top:1px solid #ffffff;border-left:1px solid #ffffff;border-right:1px solid #f8f8f8;border-bottom:2px solid #a0a0a0;border-radius:3px;box-sizing:border-box"></div>
<div style="position:absolute;left:714.96px;top:744.60px;white-space:pre;color:#000;font-family:'Liberation Sans', sans-serif;font-size:14px;line-height:14px;font-weight:400;font-style:normal;transform:scaleX(0.9433);transform-origin:0 0;">2022-11-29, Q=1</div>
<div style="position:absolute;left:634.75px;top:769.50px;white-space:pre;color:#2c3e5c;font-family:'Liberation Sans', sans-serif;font-size:14px;line-height:14px;font-weight:400;font-style:normal;transform:scaleX(0.9486);transform-origin:0 0;">Image scale</div>
<div style="position:absolute;left:713px;top:766.3px;width:336.29999999999995px;height:26.700000000000045px;background:#fff8cc"></div>
<div style="position:absolute;left:718.5px;top:786px;width:321.5px;height:5px;background:#e7e7e7;border:1px solid #d4d4d4;border-radius:2px;box-sizing:border-box"></div>
<svg style="position:absolute;left:0;top:0" width="1212" height="831" viewBox="0 0 1212 831"><rect x="725.5" y="772.3" width="1" height="5.100000000000023" fill="#a8a8a8"/><rect x="733.1" y="772.3" width="1" height="5.100000000000023" fill="#a8a8a8"/><rect x="740.7" y="772.3" width="1" height="5.100000000000023" fill="#a8a8a8"/><rect x="748.3" y="772.3" width="1" height="5.100000000000023" fill="#a8a8a8"/><rect x="755.9" y="772.3" width="1" height="5.100000000000023" fill="#a8a8a8"/><rect x="763.5" y="772.3" width="1" height="5.100000000000023" fill="#a8a8a8"/><rect x="771.1" y="772.3" width="1" height="5.100000000000023" fill="#a8a8a8"/><rect x="778.7" y="772.3" width="1" height="5.100000000000023" fill="#a8a8a8"/><rect x="786.3" y="772.3" width="1" height="5.100000000000023" fill="#a8a8a8"/><rect x="793.9" y="772.3" width="1" height="5.100000000000023" fill="#a8a8a8"/><rect x="801.5" y="772.3" width="1" height="5.100000000000023" fill="#a8a8a8"/><rect x="809.1" y="772.3" width="1" height="5.100000000000023" fill="#a8a8a8"/><rect x="816.7" y="772.3" width="1" height="5.100000000000023" fill="#a8a8a8"/><rect x="824.3" y="772.3" width="1" height="5.100000000000023" fill="#a8a8a8"/><rect x="831.9" y="772.3" width="1" height="5.100000000000023" fill="#a8a8a8"/><rect x="839.5" y="772.3" width="1" height="5.100000000000023" fill="#a8a8a8"/><rect x="847.1" y="772.3" width="1" height="5.100000000000023" fill="#a8a8a8"/><rect x="854.7" y="772.3" width="1" height="5.100000000000023" fill="#a8a8a8"/><rect x="862.3" y="772.3" width="1" height="5.100000000000023" fill="#a8a8a8"/><rect x="869.9" y="772.3" width="1" height="5.100000000000023" fill="#a8a8a8"/><rect x="877.5" y="772.3" width="1" height="5.100000000000023" fill="#a8a8a8"/><rect x="885.1" y="772.3" width="1" height="5.100000000000023" fill="#a8a8a8"/><rect x="892.7" y="772.3" width="1" height="5.100000000000023" fill="#a8a8a8"/><rect x="900.3" y="772.3" width="1" height="5.100000000000023" fill="#a8a8a8"/><rect x="907.9" y="772.3" width="1" height="5.100000000000023" fill="#a8a8a8"/><rect x="915.5" y="772.3" width="1" height="5.100000000000023" fill="#a8a8a8"/><rect x="923.1" y="772.3" width="1" height="5.100000000000023" fill="#a8a8a8"/><rect x="930.7" y="772.3" width="1" height="5.100000000000023" fill="#a8a8a8"/><rect x="938.3" y="772.3" width="1" height="5.100000000000023" fill="#a8a8a8"/><rect x="945.9" y="772.3" width="1" height="5.100000000000023" fill="#a8a8a8"/><rect x="953.5" y="772.3" width="1" height="5.100000000000023" fill="#a8a8a8"/><rect x="961.1" y="772.3" width="1" height="5.100000000000023" fill="#a8a8a8"/><rect x="968.7" y="772.3" width="1" height="5.100000000000023" fill="#a8a8a8"/><rect x="976.3" y="772.3" width="1" height="5.100000000000023" fill="#a8a8a8"/><rect x="983.9" y="772.3" width="1" height="5.100000000000023" fill="#a8a8a8"/><rect x="991.5" y="772.3" width="1" height="5.100000000000023" fill="#a8a8a8"/><rect x="999.1" y="772.3" width="1" height="5.100000000000023" fill="#a8a8a8"/><rect x="1006.7" y="772.3" width="1" height="5.100000000000023" fill="#a8a8a8"/><rect x="1014.3" y="772.3" width="1" height="5.100000000000023" fill="#a8a8a8"/><rect x="1021.9" y="772.3" width="1" height="5.100000000000023" fill="#a8a8a8"/><rect x="1029.5" y="772.3" width="1" height="5.100000000000023" fill="#a8a8a8"/><rect x="1037.1" y="772.3" width="1" height="5.100000000000023" fill="#a8a8a8"/><rect x="1044.7" y="772.3" width="1" height="5.100000000000023" fill="#a8a8a8"/><path d="M867.3,793 L876.3,793 L876.3,784 L871.8,780 L867.3,784 Z" fill="#0067c0"/></svg>
<div style="position:absolute;left:1060.8px;top:741px;width:122px;height:55px;background:#ffffff;border:1px solid #e8e8e8;border-radius:5px;box-sizing:border-box"></div>
<div style="position:absolute;left:1064px;top:744.6px;width:115.2px;height:47.7px;background:#ffc0cb"></div>
<div style="position:absolute;left:1073.95px;top:752.70px;white-space:pre;color:#a00020;font-family:'Liberation Sans', sans-serif;font-size:15px;line-height:15px;font-weight:700;font-style:normal;transform:scaleX(1.0494);transform-origin:0 0;">Save/update</div>
<div style="position:absolute;left:1077.57px;top:768.60px;white-space:pre;color:#a00020;font-family:'Liberation Sans', sans-serif;font-size:15px;line-height:15px;font-weight:700;font-style:normal;transform:scaleX(1.0275);transform-origin:0 0;">model 8875</div></body></html>
